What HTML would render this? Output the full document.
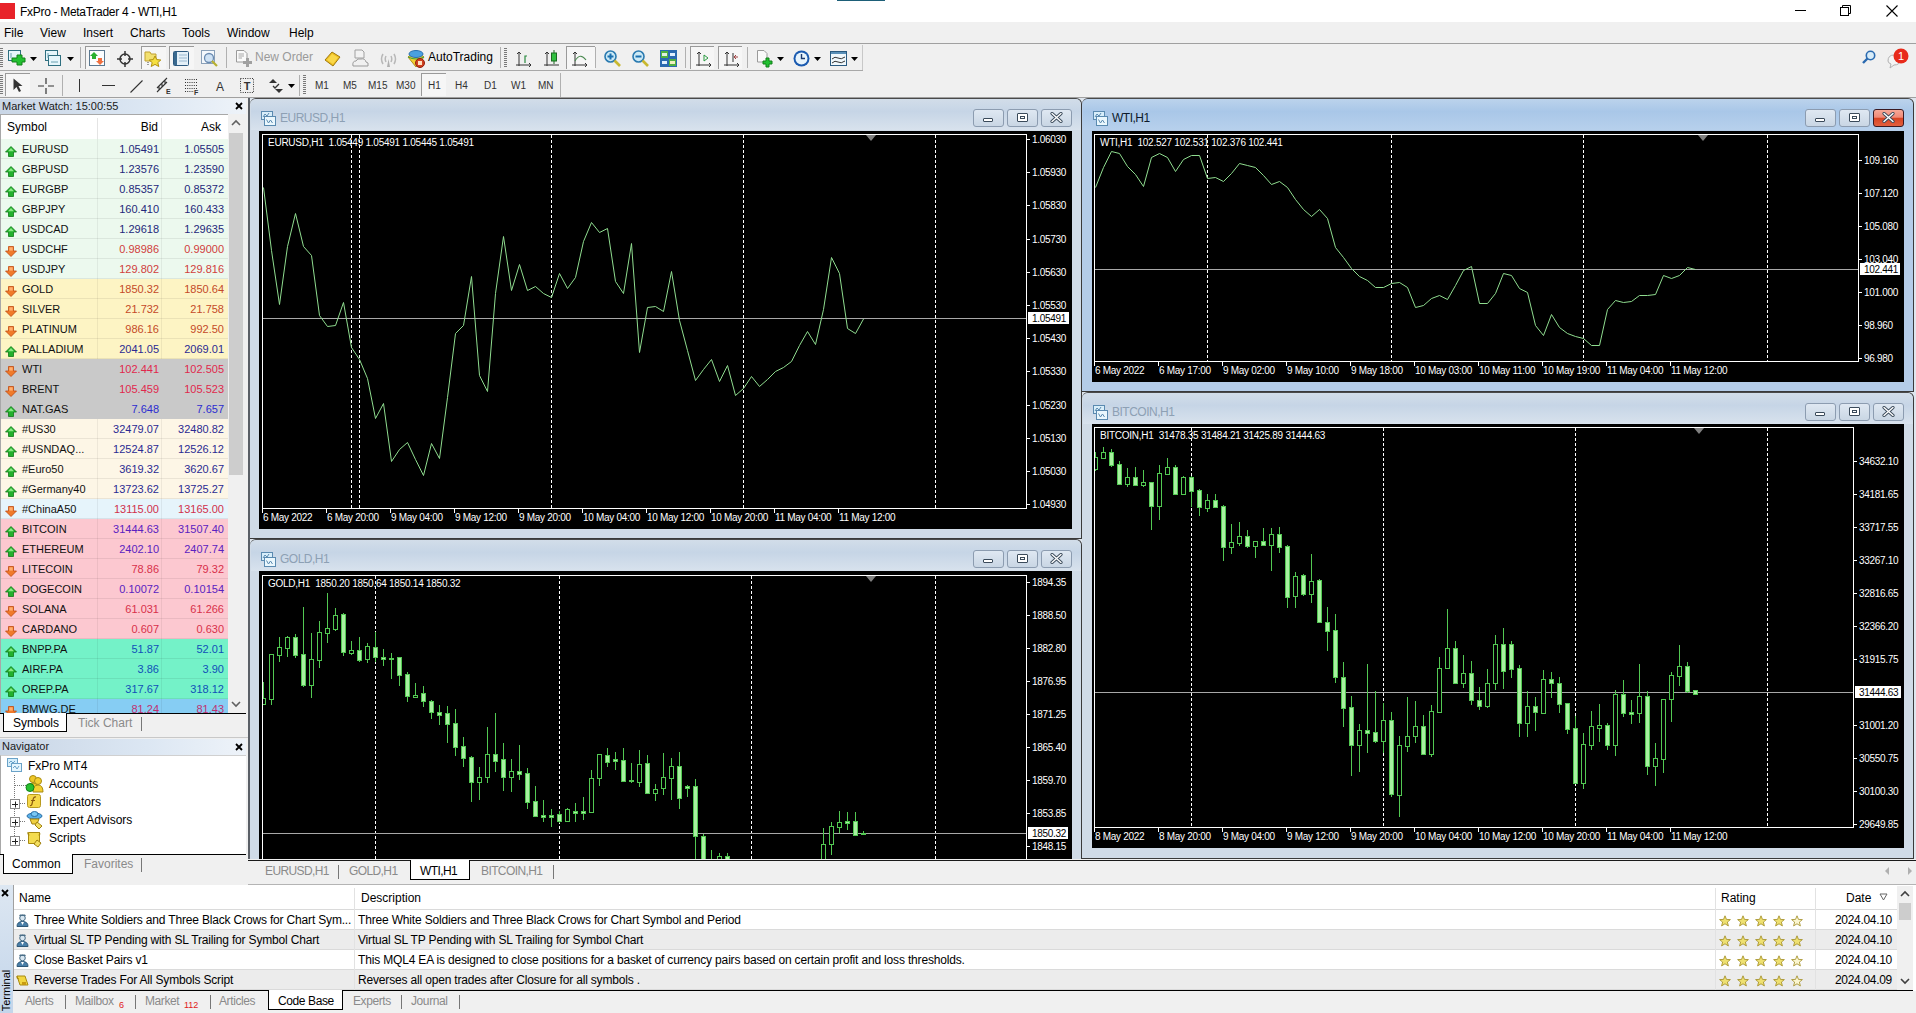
<!DOCTYPE html><html><head><meta charset="utf-8"><style>
html,body{margin:0;padding:0;width:1916px;height:1013px;overflow:hidden;background:#f0f0f0;font-family:"Liberation Sans",sans-serif;}
.t{position:absolute;white-space:nowrap;line-height:1;}
.r{text-align:right;}
</style></head><body>
<div style="position:absolute;left:0px;top:0px;width:1916px;height:22px;background:#fff"></div>
<div style="position:absolute;left:0px;top:3px;width:15px;height:16px;background:#e8232a"></div>
<div class="t" style="left:20px;top:6px;font-size:12px;color:#000;letter-spacing:-0.3px">FxPro - MetaTrader 4 - WTI,H1</div>
<div style="position:absolute;left:837px;top:0px;width:48px;height:1px;background:#1d5f78"></div>
<div style="position:absolute;left:1795px;top:10px;width:11px;height:1px;background:#000"></div>
<svg style="position:absolute;left:1840px;top:5px" width="12" height="12"><path d="M2.5 2.5 V0.5 H10.5 V8.5 H8.5" fill="none" stroke="#000"/><rect x="0.5" y="2.5" width="8" height="8" fill="#fff" stroke="#000"/></svg>
<svg style="position:absolute;left:1886px;top:5px" width="12" height="12"><path d="M0.5 0.5 L11.5 11.5 M11.5 0.5 L0.5 11.5" stroke="#000" stroke-width="1.1"/></svg>
<div style="position:absolute;left:0px;top:22px;width:1916px;height:22px;background:#f0f0f0"></div>
<div class="t" style="left:4px;top:27px;font-size:12px;color:#000;">File</div>
<div class="t" style="left:40px;top:27px;font-size:12px;color:#000;">View</div>
<div class="t" style="left:83px;top:27px;font-size:12px;color:#000;">Insert</div>
<div class="t" style="left:130px;top:27px;font-size:12px;color:#000;">Charts</div>
<div class="t" style="left:182px;top:27px;font-size:12px;color:#000;">Tools</div>
<div class="t" style="left:227px;top:27px;font-size:12px;color:#000;">Window</div>
<div class="t" style="left:289px;top:27px;font-size:12px;color:#000;">Help</div>
<div style="position:absolute;left:0px;top:43px;width:1916px;height:1px;background:#a0a0a0"></div>
<div style="position:absolute;left:0px;top:44px;width:1916px;height:54px;background:#f0f0f0"></div>
<div style="position:absolute;left:0px;top:70px;width:863px;height:1px;background:#a8a8a8"></div>
<div style="position:absolute;left:0px;top:97px;width:1916px;height:1px;background:#a0a0a0"></div>
<svg style="position:absolute;left:0px;top:48px" width="3" height="20" viewBox="0 0 3 20"><rect x="0" y="0" width="3" height="1" fill="#7a7a7a"/><rect x="0" y="2" width="3" height="1" fill="#7a7a7a"/><rect x="0" y="4" width="3" height="1" fill="#7a7a7a"/><rect x="0" y="6" width="3" height="1" fill="#7a7a7a"/><rect x="0" y="8" width="3" height="1" fill="#7a7a7a"/><rect x="0" y="10" width="3" height="1" fill="#7a7a7a"/><rect x="0" y="12" width="3" height="1" fill="#7a7a7a"/><rect x="0" y="14" width="3" height="1" fill="#7a7a7a"/><rect x="0" y="16" width="3" height="1" fill="#7a7a7a"/><rect x="0" y="18" width="3" height="1" fill="#7a7a7a"/></svg>
<svg style="position:absolute;left:8px;top:50px" width="18" height="16" viewBox="0 0 18 16"><rect x="0.5" y="0.5" width="12" height="10" fill="#e6f6fb" stroke="#2f6f80"/><path d="M3 3 V8" stroke="#6aa0b0"/><path d="M5 9 H10 V6 H15 V9 H18 V13 H15 V16 H10 V13 H5Z" transform="translate(-1,-1)" fill="#22c030" stroke="#118018"/></svg>
<svg style="position:absolute;left:30px;top:57px" width="7" height="4" viewBox="0 0 7 4"><path d="M0 0 H7 L3.5 4Z" fill="#000"/></svg>
<svg style="position:absolute;left:45px;top:50px" width="18" height="17" viewBox="0 0 18 17"><rect x="0.5" y="0.5" width="12" height="10" fill="#e6f6fb" stroke="#2f6f80"/><rect x="3.5" y="5.5" width="12" height="10" fill="#e6f6fb" stroke="#2f6f80"/><path d="M3 3 V8 M6 12 H13" stroke="#6aa0b0"/></svg>
<svg style="position:absolute;left:67px;top:57px" width="7" height="4" viewBox="0 0 7 4"><path d="M0 0 H7 L3.5 4Z" fill="#000"/></svg>
<div style="position:absolute;left:80px;top:47px;width:1px;height:21px;background:#b0b0b0"></div>
<div style="position:absolute;left:85px;top:46px;width:25px;height:23px;border-top:1px solid #9a9a9a;border-left:1px solid #9a9a9a;background:#f6f6f6;box-sizing:border-box"></div>
<svg style="position:absolute;left:89px;top:50px" width="16" height="16" viewBox="0 0 16 16"><rect x="0.5" y="0.5" width="15" height="15" fill="#fbfdff" stroke="#5a7890"/><path d="M5 2 L9 6 H7 V9 H3 V6 H1Z" fill="#28b030"/><path d="M9 8 H13 V11 H15 L11 15 L7 11 H9Z" fill="#f07040"/></svg>
<svg style="position:absolute;left:117px;top:51px" width="16" height="16" viewBox="0 0 16 16"><circle cx="8" cy="8" r="5" fill="none" stroke="#333" stroke-width="1.5"/><path d="M8 0 V5 M8 11 V16 M0 8 H5 M11 8 H16" stroke="#333" stroke-width="1.5"/></svg>
<div style="position:absolute;left:141px;top:46px;width:25px;height:23px;border-top:1px solid #9a9a9a;border-left:1px solid #9a9a9a;background:#f6f6f6;box-sizing:border-box"></div>
<svg style="position:absolute;left:144px;top:50px" width="18" height="17" viewBox="0 0 18 17"><path d="M1 2 H6 L7 4 H12 V11 H1Z" fill="#f2e070" stroke="#c0a030"/><path d="M11 6 L12.8 9.6 L16.8 10 L13.8 12.6 L14.8 16.5 L11 14.4 L7.2 16.5 L8.2 12.6 L5.2 10 L9.2 9.6Z" fill="#f6e040" stroke="#b09010"/><path d="M4 12 V16" stroke="#444" stroke-dasharray="1 1"/></svg>
<div style="position:absolute;left:169px;top:46px;width:25px;height:23px;border-top:1px solid #9a9a9a;border-left:1px solid #9a9a9a;background:#f6f6f6;box-sizing:border-box"></div>
<svg style="position:absolute;left:173px;top:51px" width="16" height="15" viewBox="0 0 16 15"><rect x="0.5" y="0.5" width="15" height="14" rx="1" fill="#e4f0f8" stroke="#2e5a80"/><rect x="1" y="1" width="3" height="13" fill="#3a6a90"/><path d="M6 4 H14 M6 7 H14 M6 10 H14" stroke="#9ab8d0"/></svg>
<svg style="position:absolute;left:201px;top:50px" width="18" height="18" viewBox="0 0 18 18"><rect x="0.5" y="0.5" width="13" height="13" fill="#f4f8fc" stroke="#8aa0b8"/><circle cx="8" cy="8" r="4.5" fill="#cfe2f4" stroke="#6a8ab0" stroke-width="1.3"/><path d="M11 11 L16 16" stroke="#b8b030" stroke-width="2.2"/></svg>
<div style="position:absolute;left:226px;top:47px;width:1px;height:21px;background:#b0b0b0"></div>
<svg style="position:absolute;left:236px;top:50px" width="17" height="18" viewBox="0 0 17 18"><path d="M0.5 0.5 H8 L11 3.5 V12 H0.5Z" fill="#fafafa" stroke="#9a9a9a"/><path d="M2.5 4 H8 M2.5 6 H8 M2.5 8 H6" stroke="#a8a8a8"/><path d="M7 11 H10 V8 H13 V11 H16 V14 H13 V17 H10 V14 H7Z" fill="#a0a0a0"/></svg>
<div class="t" style="left:255px;top:51px;font-size:12px;color:#9a9a9a;">New Order</div>
<svg style="position:absolute;left:324px;top:51px" width="17" height="16" viewBox="0 0 17 16"><path d="M1 9 L8 1 L16 6 L9 15Z" fill="#f0c020" stroke="#a07a10"/><path d="M3 9 L8 3 L14 6.5 L9 13Z" fill="#fad84a"/></svg>
<svg style="position:absolute;left:352px;top:49px" width="17" height="18" viewBox="0 0 17 18"><path d="M3 1 H10 L12 3 V9 H3Z" fill="#f2f2f2" stroke="#a0a0a0"/><path d="M1 17 Q0 12 4 12 Q5 9 9 10 Q13 9 14 13 Q17 13 16 17Z" fill="#f0f0f0" stroke="#9a9a9a"/></svg>
<svg style="position:absolute;left:380px;top:51px" width="17" height="16" viewBox="0 0 17 16"><path d="M3 3 Q0 8 3 13 M14 3 Q17 8 14 13 M6 5 Q4.5 8 6 11 M11 5 Q12.5 8 11 11" stroke="#b8b8b8" stroke-width="1.5" fill="none"/><path d="M8.5 8 L7 16 H10Z" fill="#b0b0b0"/></svg>
<svg style="position:absolute;left:407px;top:49px" width="18" height="19" viewBox="0 0 18 19"><path d="M1 8 L9 18 L17 8 Q15 5 9 5 Q3 5 1 8Z" fill="#f2d030" stroke="#b09020"/><path d="M1 8 Q9 12 17 8" stroke="#40a040" fill="none"/><ellipse cx="9" cy="5" rx="7" ry="3.5" fill="#4aa0e0" stroke="#2a70b0"/><circle cx="13" cy="14" r="4.5" fill="#d04020" stroke="#902010"/><rect x="11" y="12" width="4" height="4" fill="#ffe0c0"/></svg>
<div class="t" style="left:428px;top:51px;font-size:12px;color:#000;">AutoTrading</div>
<div style="position:absolute;left:500px;top:47px;width:1px;height:21px;background:#b0b0b0"></div>
<svg style="position:absolute;left:504px;top:48px" width="3" height="20" viewBox="0 0 3 20"><rect x="0" y="0" width="3" height="1" fill="#7a7a7a"/><rect x="0" y="2" width="3" height="1" fill="#7a7a7a"/><rect x="0" y="4" width="3" height="1" fill="#7a7a7a"/><rect x="0" y="6" width="3" height="1" fill="#7a7a7a"/><rect x="0" y="8" width="3" height="1" fill="#7a7a7a"/><rect x="0" y="10" width="3" height="1" fill="#7a7a7a"/><rect x="0" y="12" width="3" height="1" fill="#7a7a7a"/><rect x="0" y="14" width="3" height="1" fill="#7a7a7a"/><rect x="0" y="16" width="3" height="1" fill="#7a7a7a"/><rect x="0" y="18" width="3" height="1" fill="#7a7a7a"/></svg>
<svg style="position:absolute;left:516px;top:52px" width="15" height="15" viewBox="0 0 15 15"><path d="M3 0 V14 M0 13 H15 M1 2 L3 0 L5 2 M13 11 L15 13 L13 15" stroke="#333" fill="none"/><path d="M9 11 V4 H11" stroke="#2a8a40" fill="none" stroke-width="1.2"/></svg>
<svg style="position:absolute;left:544px;top:50px" width="15" height="17" viewBox="0 0 15 17"><path d="M3 2 V16 M0 15 H15 M1 4 L3 2 L5 4" stroke="#333" fill="none"/><path d="M10 0 V14" stroke="#1a6a20"/><rect x="7.5" y="3" width="5" height="8" fill="#30c040" stroke="#1a6a20"/></svg>
<div style="position:absolute;left:566px;top:46px;width:29px;height:23px;border-top:1px solid #9a9a9a;border-left:1px solid #9a9a9a;background:#f6f6f6;box-sizing:border-box"></div>
<svg style="position:absolute;left:572px;top:52px" width="15" height="15" viewBox="0 0 15 15"><path d="M3 0 V14 M0 13 H15 M1 2 L3 0 L5 2 M13 11 L15 13 L13 15" stroke="#333" fill="none"/><path d="M3 9 Q8 0 14 8" stroke="#4a8a50" fill="none" stroke-width="1.1"/></svg>
<div style="position:absolute;left:595px;top:47px;width:1px;height:21px;background:#b0b0b0"></div>
<svg style="position:absolute;left:604px;top:50px" width="17" height="17" viewBox="0 0 17 17"><circle cx="6.5" cy="6.5" r="5.5" fill="#cdeaf6" stroke="#2a7ab0" stroke-width="1.6"/><path d="M6.5 3.5 V9.5 M3.5 6.5 H9.5" stroke="#1a70b0" stroke-width="2"/><path d="M10.5 10.5 L16 16" stroke="#c8b830" stroke-width="2.6"/></svg>
<svg style="position:absolute;left:632px;top:50px" width="17" height="17" viewBox="0 0 17 17"><circle cx="6.5" cy="6.5" r="5.5" fill="#cdeaf6" stroke="#2a7ab0" stroke-width="1.6"/><path d="M3.5 6.5 H9.5" stroke="#1a70b0" stroke-width="2"/><path d="M10.5 10.5 L16 16" stroke="#c8b830" stroke-width="2.6"/></svg>
<svg style="position:absolute;left:660px;top:50px" width="17" height="17" viewBox="0 0 17 17"><rect x="0" y="0" width="17" height="17" fill="#2a6ab0"/><rect x="1" y="1" width="7" height="7" fill="#50b040"/><rect x="9" y="9" width="7" height="7" fill="#50b040"/><rect x="2" y="3" width="5" height="3" fill="#e0f0e0"/><rect x="10" y="3" width="5" height="3" fill="#e0f0ff"/><rect x="2" y="11" width="5" height="3" fill="#e0f0ff"/><rect x="10" y="11" width="5" height="3" fill="#f0f0c0"/></svg>
<div style="position:absolute;left:685px;top:47px;width:1px;height:21px;background:#b0b0b0"></div>
<div style="position:absolute;left:690px;top:46px;width:24px;height:23px;border-top:1px solid #9a9a9a;border-left:1px solid #9a9a9a;background:#f6f6f6;box-sizing:border-box"></div>
<svg style="position:absolute;left:696px;top:52px" width="15" height="15" viewBox="0 0 15 15"><path d="M3 0 V14 M0 13 H15 M1 2 L3 0 L5 2 M13 11 L15 13 L13 15" stroke="#333" fill="none"/><path d="M8 3 L12 6 L8 9Z" fill="none" stroke="#2a9a40"/></svg>
<div style="position:absolute;left:718px;top:46px;width:24px;height:23px;border-top:1px solid #9a9a9a;border-left:1px solid #9a9a9a;background:#f6f6f6;box-sizing:border-box"></div>
<svg style="position:absolute;left:724px;top:52px" width="15" height="15" viewBox="0 0 15 15"><path d="M3 0 V14 M0 13 H15 M1 2 L3 0 L5 2 M13 11 L15 13 L13 15 M9 1 V10" stroke="#333" fill="none"/><path d="M14 5 H10 M12 3 L10 5 L12 7" stroke="#a04040" fill="none"/></svg>
<div style="position:absolute;left:747px;top:47px;width:1px;height:21px;background:#b0b0b0"></div>
<svg style="position:absolute;left:757px;top:50px" width="17" height="18" viewBox="0 0 17 18"><path d="M0.5 0.5 H7 L10 3.5 V12 H0.5Z" fill="#fafafa" stroke="#9a9a9a"/><path d="M6 11 H9 V8 H12 V11 H15 V14 H12 V17 H9 V14 H6Z" fill="#20c030" stroke="#108018"/></svg>
<svg style="position:absolute;left:777px;top:57px" width="7" height="4" viewBox="0 0 7 4"><path d="M0 0 H7 L3.5 4Z" fill="#000"/></svg>
<svg style="position:absolute;left:793px;top:50px" width="17" height="17" viewBox="0 0 17 17"><circle cx="8.5" cy="8.5" r="8" fill="#1a5ab0"/><circle cx="8.5" cy="8.5" r="6" fill="#e8f4fc"/><path d="M8.5 4 V8.5 H12" stroke="#1a3a70" stroke-width="1.4" fill="none"/></svg>
<svg style="position:absolute;left:814px;top:57px" width="7" height="4" viewBox="0 0 7 4"><path d="M0 0 H7 L3.5 4Z" fill="#000"/></svg>
<svg style="position:absolute;left:830px;top:51px" width="17" height="15" viewBox="0 0 17 15"><rect x="0.5" y="0.5" width="16" height="14" fill="#f0f8fc" stroke="#2a5a80"/><rect x="1" y="1" width="15" height="2" fill="#5a90b8"/><path d="M2 8 Q5 5 8 7 T15 6 M2 12 Q5 9 8 11 T15 10" stroke="#333" fill="none"/></svg>
<svg style="position:absolute;left:851px;top:57px" width="7" height="4" viewBox="0 0 7 4"><path d="M0 0 H7 L3.5 4Z" fill="#000"/></svg>
<div style="position:absolute;left:862px;top:45px;width:1px;height:25px;background:#c8c8c8"></div>
<svg style="position:absolute;left:1862px;top:50px" width="14" height="14" viewBox="0 0 14 14"><circle cx="8.5" cy="5.5" r="4.2" fill="#d8ecf8" stroke="#2a6ab0" stroke-width="1.6"/><path d="M5.5 8.5 L1 13" stroke="#2a6ab0" stroke-width="2.4"/></svg>
<svg style="position:absolute;left:1884px;top:47px" width="30" height="22" viewBox="0 0 30 22"><path d="M4 14 Q4 8 10 8 Q16 8 16 13 Q16 18 10 18 L6 21 L7 17 Q4 16 4 14Z" fill="#f4f4f4" stroke="#b0b0b0"/><circle cx="17" cy="9" r="7.5" fill="#e82a1a"/><text x="17" y="13" font-size="11" fill="#fff" text-anchor="middle" font-family="Liberation Sans">1</text></svg>
<svg style="position:absolute;left:0px;top:75px" width="3" height="20" viewBox="0 0 3 20"><rect x="0" y="0" width="3" height="1" fill="#7a7a7a"/><rect x="0" y="2" width="3" height="1" fill="#7a7a7a"/><rect x="0" y="4" width="3" height="1" fill="#7a7a7a"/><rect x="0" y="6" width="3" height="1" fill="#7a7a7a"/><rect x="0" y="8" width="3" height="1" fill="#7a7a7a"/><rect x="0" y="10" width="3" height="1" fill="#7a7a7a"/><rect x="0" y="12" width="3" height="1" fill="#7a7a7a"/><rect x="0" y="14" width="3" height="1" fill="#7a7a7a"/><rect x="0" y="16" width="3" height="1" fill="#7a7a7a"/><rect x="0" y="18" width="3" height="1" fill="#7a7a7a"/></svg>
<div style="position:absolute;left:5px;top:73px;width:25px;height:23px;border-top:1px solid #9a9a9a;border-left:1px solid #9a9a9a;background:#f6f6f6;box-sizing:border-box"></div>
<svg style="position:absolute;left:13px;top:78px" width="10" height="15" viewBox="0 0 10 15"><path d="M0.5 0.5 L0.5 12 L3.5 9 L6 14 L8 13 L5.5 8 L9.5 8Z" fill="#333"/></svg>
<svg style="position:absolute;left:38px;top:78px" width="16" height="16" viewBox="0 0 16 16"><path d="M8 0 V6 M8 10 V16 M0 8 H6 M10 8 H16" stroke="#333" stroke-width="1.2"/></svg>
<div style="position:absolute;left:62px;top:75px;width:1px;height:21px;background:#b0b0b0"></div>
<div style="position:absolute;left:79px;top:79px;width:1px;height:13px;background:#333"></div>
<div style="position:absolute;left:102px;top:85px;width:13px;height:1px;background:#333"></div>
<svg style="position:absolute;left:130px;top:80px" width="13" height="13" viewBox="0 0 13 13"><path d="M0.5 12.5 L12.5 0.5" stroke="#333" stroke-width="1.1"/></svg>
<svg style="position:absolute;left:156px;top:77px" width="16" height="18" viewBox="0 0 16 18"><path d="M1 11 L11 1 M1 15 L11 5 M3 13 V9 M6 10 V6 M9 7 V3" stroke="#333" stroke-width="1.1" fill="none"/><text x="10" y="17" font-size="7" font-weight="bold" fill="#333" font-family="Liberation Sans">E</text></svg>
<svg style="position:absolute;left:184px;top:78px" width="16" height="17" viewBox="0 0 16 17"><path d="M1 1.5 H13 M1 4.5 H13 M1 7.5 H13 M1 10.5 H13 M1 13.5 H10" stroke="#333" stroke-dasharray="1 1.2"/><text x="10" y="17" font-size="7" font-weight="bold" fill="#333" font-family="Liberation Sans">F</text></svg>
<div class="t" style="left:216px;top:81px;font-size:12px;color:#333;">A</div>
<svg style="position:absolute;left:240px;top:78px" width="14" height="15" viewBox="0 0 14 15"><rect x="0.5" y="0.5" width="13" height="14" fill="none" stroke="#333" stroke-dasharray="1 1.3"/><text x="7" y="12" font-size="11" font-weight="bold" text-anchor="middle" fill="#333" font-family="Liberation Sans">T</text></svg>
<svg style="position:absolute;left:269px;top:79px" width="15" height="14" viewBox="0 0 15 14"><path d="M4 0 L8 4 H0Z M10 14 L6 10 H14Z" fill="#333"/><path d="M4 7 L6 9 L10 5" stroke="#333" stroke-width="1.3" fill="none"/></svg>
<svg style="position:absolute;left:288px;top:84px" width="7" height="4" viewBox="0 0 7 4"><path d="M0 0 H7 L3.5 4Z" fill="#000"/></svg>
<div style="position:absolute;left:299px;top:75px;width:1px;height:21px;background:#b0b0b0"></div>
<svg style="position:absolute;left:303px;top:75px" width="3" height="20" viewBox="0 0 3 20"><rect x="0" y="0" width="3" height="1" fill="#7a7a7a"/><rect x="0" y="2" width="3" height="1" fill="#7a7a7a"/><rect x="0" y="4" width="3" height="1" fill="#7a7a7a"/><rect x="0" y="6" width="3" height="1" fill="#7a7a7a"/><rect x="0" y="8" width="3" height="1" fill="#7a7a7a"/><rect x="0" y="10" width="3" height="1" fill="#7a7a7a"/><rect x="0" y="12" width="3" height="1" fill="#7a7a7a"/><rect x="0" y="14" width="3" height="1" fill="#7a7a7a"/><rect x="0" y="16" width="3" height="1" fill="#7a7a7a"/><rect x="0" y="18" width="3" height="1" fill="#7a7a7a"/></svg>
<div style="position:absolute;left:421px;top:73px;width:25px;height:23px;border-top:1px solid #9a9a9a;border-left:1px solid #9a9a9a;background:#f6f6f6;box-sizing:border-box"></div>
<div class="t" style="left:315px;top:81px;font-size:10px;color:#333;">M1</div>
<div class="t" style="left:343px;top:81px;font-size:10px;color:#333;">M5</div>
<div class="t" style="left:368px;top:81px;font-size:10px;color:#333;">M15</div>
<div class="t" style="left:396px;top:81px;font-size:10px;color:#333;">M30</div>
<div class="t" style="left:428px;top:81px;font-size:10px;color:#333;">H1</div>
<div class="t" style="left:455px;top:81px;font-size:10px;color:#333;">H4</div>
<div class="t" style="left:484px;top:81px;font-size:10px;color:#333;">D1</div>
<div class="t" style="left:511px;top:81px;font-size:10px;color:#333;">W1</div>
<div class="t" style="left:538px;top:81px;font-size:10px;color:#333;">MN</div>
<div style="position:absolute;left:560px;top:73px;width:1px;height:24px;background:#b0b0b0"></div>
<div style="position:absolute;left:248px;top:98px;width:1668px;height:763px;background:#dfe6ee"></div>
<div style="position:absolute;left:248px;top:98px;width:2px;height:763px;background:#5a5f66"></div>
<div style="position:absolute;left:0px;top:98px;width:248px;height:640px;background:#f0f0f0"></div>
<div style="position:absolute;left:0px;top:99px;width:246px;height:15px;background:linear-gradient(to right,#c9d6e6,#dce7f3 60%,#eef3f9)"></div>
<div class="t" style="left:2px;top:101px;font-size:11px;color:#1a1a1a;">Market Watch: 15:00:55</div>
<svg style="position:absolute;left:235px;top:102px" width="8" height="8"><path d="M1 1 L7 7 M7 1 L1 7" stroke="#000" stroke-width="1.8"/></svg>
<div style="position:absolute;left:0px;top:114px;width:1px;height:599px;background:#a8a8a8"></div>
<div style="position:absolute;left:1px;top:115px;width:227px;height:24px;background:#fff"></div>
<div style="position:absolute;left:97px;top:118px;width:1px;height:21px;background:#e4e4e4"></div>
<div style="position:absolute;left:161px;top:118px;width:1px;height:21px;background:#e4e4e4"></div>
<div class="t" style="left:7px;top:121px;font-size:12px;color:#000;">Symbol</div>
<div class="t" style="left:97px;top:121px;font-size:12px;color:#000;width:61px;text-align:right">Bid</div>
<div class="t" style="left:161px;top:121px;font-size:12px;color:#000;width:60px;text-align:right">Ask</div>
<div style="position:absolute;left:1px;top:114px;width:227px;height:1px;background:#a8a8a8"></div>
<div style="position:absolute;left:1px;top:139px;width:227px;height:574px;overflow:hidden">
<div style="position:absolute;left:0;top:0px;width:227px;height:20px;background:#ecf9ee"></div>
<div style="position:absolute;left:0;top:19px;width:227px;height:1px;background:rgba(0,0,0,0.07)"></div>
<div style="position:absolute;left:96px;top:0px;width:1px;height:20px;background:rgba(0,0,0,0.06)"></div>
<div style="position:absolute;left:160px;top:0px;width:1px;height:20px;background:rgba(0,0,0,0.06)"></div>
<div style="position:absolute;left:4px;top:4px;width:12px;height:11px"><svg width="12" height="11" viewBox="0 0 12 11"><path d="M6 0.5 L11.5 6 L8.5 6 L8.5 10.5 L3.5 10.5 L3.5 6 L0.5 6 Z" fill="#22b02c" stroke="#0e7a16" stroke-width="0.8"/><path d="M6 2 L9 5.2 L3 5.2Z" fill="#8ae884"/></svg></div>
<div class="t" style="left:21px;top:5px;font-size:11px;color:#111">EURUSD</div>
<div class="t" style="left:96px;top:5px;width:62px;text-align:right;font-size:11px;color:#24287a">1.05491</div>
<div class="t" style="left:160px;top:5px;width:63px;text-align:right;font-size:11px;color:#24287a">1.05505</div>
<div style="position:absolute;left:0;top:20px;width:227px;height:20px;background:#ecf9ee"></div>
<div style="position:absolute;left:0;top:39px;width:227px;height:1px;background:rgba(0,0,0,0.07)"></div>
<div style="position:absolute;left:96px;top:20px;width:1px;height:20px;background:rgba(0,0,0,0.06)"></div>
<div style="position:absolute;left:160px;top:20px;width:1px;height:20px;background:rgba(0,0,0,0.06)"></div>
<div style="position:absolute;left:4px;top:24px;width:12px;height:11px"><svg width="12" height="11" viewBox="0 0 12 11"><path d="M6 0.5 L11.5 6 L8.5 6 L8.5 10.5 L3.5 10.5 L3.5 6 L0.5 6 Z" fill="#22b02c" stroke="#0e7a16" stroke-width="0.8"/><path d="M6 2 L9 5.2 L3 5.2Z" fill="#8ae884"/></svg></div>
<div class="t" style="left:21px;top:25px;font-size:11px;color:#111">GBPUSD</div>
<div class="t" style="left:96px;top:25px;width:62px;text-align:right;font-size:11px;color:#24287a">1.23576</div>
<div class="t" style="left:160px;top:25px;width:63px;text-align:right;font-size:11px;color:#24287a">1.23590</div>
<div style="position:absolute;left:0;top:40px;width:227px;height:20px;background:#ecf9ee"></div>
<div style="position:absolute;left:0;top:59px;width:227px;height:1px;background:rgba(0,0,0,0.07)"></div>
<div style="position:absolute;left:96px;top:40px;width:1px;height:20px;background:rgba(0,0,0,0.06)"></div>
<div style="position:absolute;left:160px;top:40px;width:1px;height:20px;background:rgba(0,0,0,0.06)"></div>
<div style="position:absolute;left:4px;top:44px;width:12px;height:11px"><svg width="12" height="11" viewBox="0 0 12 11"><path d="M6 0.5 L11.5 6 L8.5 6 L8.5 10.5 L3.5 10.5 L3.5 6 L0.5 6 Z" fill="#22b02c" stroke="#0e7a16" stroke-width="0.8"/><path d="M6 2 L9 5.2 L3 5.2Z" fill="#8ae884"/></svg></div>
<div class="t" style="left:21px;top:45px;font-size:11px;color:#111">EURGBP</div>
<div class="t" style="left:96px;top:45px;width:62px;text-align:right;font-size:11px;color:#24287a">0.85357</div>
<div class="t" style="left:160px;top:45px;width:63px;text-align:right;font-size:11px;color:#24287a">0.85372</div>
<div style="position:absolute;left:0;top:60px;width:227px;height:20px;background:#ecf9ee"></div>
<div style="position:absolute;left:0;top:79px;width:227px;height:1px;background:rgba(0,0,0,0.07)"></div>
<div style="position:absolute;left:96px;top:60px;width:1px;height:20px;background:rgba(0,0,0,0.06)"></div>
<div style="position:absolute;left:160px;top:60px;width:1px;height:20px;background:rgba(0,0,0,0.06)"></div>
<div style="position:absolute;left:4px;top:64px;width:12px;height:11px"><svg width="12" height="11" viewBox="0 0 12 11"><path d="M6 0.5 L11.5 6 L8.5 6 L8.5 10.5 L3.5 10.5 L3.5 6 L0.5 6 Z" fill="#22b02c" stroke="#0e7a16" stroke-width="0.8"/><path d="M6 2 L9 5.2 L3 5.2Z" fill="#8ae884"/></svg></div>
<div class="t" style="left:21px;top:65px;font-size:11px;color:#111">GBPJPY</div>
<div class="t" style="left:96px;top:65px;width:62px;text-align:right;font-size:11px;color:#24287a">160.410</div>
<div class="t" style="left:160px;top:65px;width:63px;text-align:right;font-size:11px;color:#24287a">160.433</div>
<div style="position:absolute;left:0;top:80px;width:227px;height:20px;background:#ecf9ee"></div>
<div style="position:absolute;left:0;top:99px;width:227px;height:1px;background:rgba(0,0,0,0.07)"></div>
<div style="position:absolute;left:96px;top:80px;width:1px;height:20px;background:rgba(0,0,0,0.06)"></div>
<div style="position:absolute;left:160px;top:80px;width:1px;height:20px;background:rgba(0,0,0,0.06)"></div>
<div style="position:absolute;left:4px;top:84px;width:12px;height:11px"><svg width="12" height="11" viewBox="0 0 12 11"><path d="M6 0.5 L11.5 6 L8.5 6 L8.5 10.5 L3.5 10.5 L3.5 6 L0.5 6 Z" fill="#22b02c" stroke="#0e7a16" stroke-width="0.8"/><path d="M6 2 L9 5.2 L3 5.2Z" fill="#8ae884"/></svg></div>
<div class="t" style="left:21px;top:85px;font-size:11px;color:#111">USDCAD</div>
<div class="t" style="left:96px;top:85px;width:62px;text-align:right;font-size:11px;color:#24287a">1.29618</div>
<div class="t" style="left:160px;top:85px;width:63px;text-align:right;font-size:11px;color:#24287a">1.29635</div>
<div style="position:absolute;left:0;top:100px;width:227px;height:20px;background:#ecf9ee"></div>
<div style="position:absolute;left:0;top:119px;width:227px;height:1px;background:rgba(0,0,0,0.07)"></div>
<div style="position:absolute;left:96px;top:100px;width:1px;height:20px;background:rgba(0,0,0,0.06)"></div>
<div style="position:absolute;left:160px;top:100px;width:1px;height:20px;background:rgba(0,0,0,0.06)"></div>
<div style="position:absolute;left:4px;top:104px;width:12px;height:11px"><svg width="12" height="11" viewBox="0 0 12 11"><path d="M3.5 0.5 L8.5 0.5 L8.5 5 L11.5 5 L6 10.5 L0.5 5 L3.5 5 Z" fill="#f07a2a" stroke="#c04a10" stroke-width="0.8"/><path d="M4.3 1.3 L7.7 1.3 L7.7 4.6 L4.3 4.6Z" fill="#ffb070"/></svg></div>
<div class="t" style="left:21px;top:105px;font-size:11px;color:#111">USDCHF</div>
<div class="t" style="left:96px;top:105px;width:62px;text-align:right;font-size:11px;color:#d0403c">0.98986</div>
<div class="t" style="left:160px;top:105px;width:63px;text-align:right;font-size:11px;color:#d0403c">0.99000</div>
<div style="position:absolute;left:0;top:120px;width:227px;height:20px;background:#ecf9ee"></div>
<div style="position:absolute;left:0;top:139px;width:227px;height:1px;background:rgba(0,0,0,0.07)"></div>
<div style="position:absolute;left:96px;top:120px;width:1px;height:20px;background:rgba(0,0,0,0.06)"></div>
<div style="position:absolute;left:160px;top:120px;width:1px;height:20px;background:rgba(0,0,0,0.06)"></div>
<div style="position:absolute;left:4px;top:124px;width:12px;height:11px"><svg width="12" height="11" viewBox="0 0 12 11"><path d="M3.5 0.5 L8.5 0.5 L8.5 5 L11.5 5 L6 10.5 L0.5 5 L3.5 5 Z" fill="#f07a2a" stroke="#c04a10" stroke-width="0.8"/><path d="M4.3 1.3 L7.7 1.3 L7.7 4.6 L4.3 4.6Z" fill="#ffb070"/></svg></div>
<div class="t" style="left:21px;top:125px;font-size:11px;color:#111">USDJPY</div>
<div class="t" style="left:96px;top:125px;width:62px;text-align:right;font-size:11px;color:#d0403c">129.802</div>
<div class="t" style="left:160px;top:125px;width:63px;text-align:right;font-size:11px;color:#d0403c">129.816</div>
<div style="position:absolute;left:0;top:140px;width:227px;height:20px;background:#fdf4c4"></div>
<div style="position:absolute;left:0;top:159px;width:227px;height:1px;background:rgba(0,0,0,0.07)"></div>
<div style="position:absolute;left:96px;top:140px;width:1px;height:20px;background:rgba(0,0,0,0.06)"></div>
<div style="position:absolute;left:160px;top:140px;width:1px;height:20px;background:rgba(0,0,0,0.06)"></div>
<div style="position:absolute;left:4px;top:144px;width:12px;height:11px"><svg width="12" height="11" viewBox="0 0 12 11"><path d="M3.5 0.5 L8.5 0.5 L8.5 5 L11.5 5 L6 10.5 L0.5 5 L3.5 5 Z" fill="#f07a2a" stroke="#c04a10" stroke-width="0.8"/><path d="M4.3 1.3 L7.7 1.3 L7.7 4.6 L4.3 4.6Z" fill="#ffb070"/></svg></div>
<div class="t" style="left:21px;top:145px;font-size:11px;color:#111">GOLD</div>
<div class="t" style="left:96px;top:145px;width:62px;text-align:right;font-size:11px;color:#c44a28">1850.32</div>
<div class="t" style="left:160px;top:145px;width:63px;text-align:right;font-size:11px;color:#c44a28">1850.64</div>
<div style="position:absolute;left:0;top:160px;width:227px;height:20px;background:#fdf4c4"></div>
<div style="position:absolute;left:0;top:179px;width:227px;height:1px;background:rgba(0,0,0,0.07)"></div>
<div style="position:absolute;left:96px;top:160px;width:1px;height:20px;background:rgba(0,0,0,0.06)"></div>
<div style="position:absolute;left:160px;top:160px;width:1px;height:20px;background:rgba(0,0,0,0.06)"></div>
<div style="position:absolute;left:4px;top:164px;width:12px;height:11px"><svg width="12" height="11" viewBox="0 0 12 11"><path d="M3.5 0.5 L8.5 0.5 L8.5 5 L11.5 5 L6 10.5 L0.5 5 L3.5 5 Z" fill="#f07a2a" stroke="#c04a10" stroke-width="0.8"/><path d="M4.3 1.3 L7.7 1.3 L7.7 4.6 L4.3 4.6Z" fill="#ffb070"/></svg></div>
<div class="t" style="left:21px;top:165px;font-size:11px;color:#111">SILVER</div>
<div class="t" style="left:96px;top:165px;width:62px;text-align:right;font-size:11px;color:#c44a28">21.732</div>
<div class="t" style="left:160px;top:165px;width:63px;text-align:right;font-size:11px;color:#c44a28">21.758</div>
<div style="position:absolute;left:0;top:180px;width:227px;height:20px;background:#fdf4c4"></div>
<div style="position:absolute;left:0;top:199px;width:227px;height:1px;background:rgba(0,0,0,0.07)"></div>
<div style="position:absolute;left:96px;top:180px;width:1px;height:20px;background:rgba(0,0,0,0.06)"></div>
<div style="position:absolute;left:160px;top:180px;width:1px;height:20px;background:rgba(0,0,0,0.06)"></div>
<div style="position:absolute;left:4px;top:184px;width:12px;height:11px"><svg width="12" height="11" viewBox="0 0 12 11"><path d="M3.5 0.5 L8.5 0.5 L8.5 5 L11.5 5 L6 10.5 L0.5 5 L3.5 5 Z" fill="#f07a2a" stroke="#c04a10" stroke-width="0.8"/><path d="M4.3 1.3 L7.7 1.3 L7.7 4.6 L4.3 4.6Z" fill="#ffb070"/></svg></div>
<div class="t" style="left:21px;top:185px;font-size:11px;color:#111">PLATINUM</div>
<div class="t" style="left:96px;top:185px;width:62px;text-align:right;font-size:11px;color:#c44a28">986.16</div>
<div class="t" style="left:160px;top:185px;width:63px;text-align:right;font-size:11px;color:#c44a28">992.50</div>
<div style="position:absolute;left:0;top:200px;width:227px;height:20px;background:#fdf4c4"></div>
<div style="position:absolute;left:0;top:219px;width:227px;height:1px;background:rgba(0,0,0,0.07)"></div>
<div style="position:absolute;left:96px;top:200px;width:1px;height:20px;background:rgba(0,0,0,0.06)"></div>
<div style="position:absolute;left:160px;top:200px;width:1px;height:20px;background:rgba(0,0,0,0.06)"></div>
<div style="position:absolute;left:4px;top:204px;width:12px;height:11px"><svg width="12" height="11" viewBox="0 0 12 11"><path d="M6 0.5 L11.5 6 L8.5 6 L8.5 10.5 L3.5 10.5 L3.5 6 L0.5 6 Z" fill="#22b02c" stroke="#0e7a16" stroke-width="0.8"/><path d="M6 2 L9 5.2 L3 5.2Z" fill="#8ae884"/></svg></div>
<div class="t" style="left:21px;top:205px;font-size:11px;color:#111">PALLADIUM</div>
<div class="t" style="left:96px;top:205px;width:62px;text-align:right;font-size:11px;color:#2a2a92">2041.05</div>
<div class="t" style="left:160px;top:205px;width:63px;text-align:right;font-size:11px;color:#2a2a92">2069.01</div>
<div style="position:absolute;left:0;top:220px;width:227px;height:20px;background:#c9c9c9"></div>
<div style="position:absolute;left:4px;top:224px;width:12px;height:11px"><svg width="12" height="11" viewBox="0 0 12 11"><path d="M3.5 0.5 L8.5 0.5 L8.5 5 L11.5 5 L6 10.5 L0.5 5 L3.5 5 Z" fill="#f07a2a" stroke="#c04a10" stroke-width="0.8"/><path d="M4.3 1.3 L7.7 1.3 L7.7 4.6 L4.3 4.6Z" fill="#ffb070"/></svg></div>
<div class="t" style="left:21px;top:225px;font-size:11px;color:#111">WTI</div>
<div class="t" style="left:96px;top:225px;width:62px;text-align:right;font-size:11px;color:#e0284c">102.441</div>
<div class="t" style="left:160px;top:225px;width:63px;text-align:right;font-size:11px;color:#e0284c">102.505</div>
<div style="position:absolute;left:0;top:240px;width:227px;height:20px;background:#c9c9c9"></div>
<div style="position:absolute;left:4px;top:244px;width:12px;height:11px"><svg width="12" height="11" viewBox="0 0 12 11"><path d="M3.5 0.5 L8.5 0.5 L8.5 5 L11.5 5 L6 10.5 L0.5 5 L3.5 5 Z" fill="#f07a2a" stroke="#c04a10" stroke-width="0.8"/><path d="M4.3 1.3 L7.7 1.3 L7.7 4.6 L4.3 4.6Z" fill="#ffb070"/></svg></div>
<div class="t" style="left:21px;top:245px;font-size:11px;color:#111">BRENT</div>
<div class="t" style="left:96px;top:245px;width:62px;text-align:right;font-size:11px;color:#e0284c">105.459</div>
<div class="t" style="left:160px;top:245px;width:63px;text-align:right;font-size:11px;color:#e0284c">105.523</div>
<div style="position:absolute;left:0;top:260px;width:227px;height:20px;background:#c9c9c9"></div>
<div style="position:absolute;left:4px;top:264px;width:12px;height:11px"><svg width="12" height="11" viewBox="0 0 12 11"><path d="M6 0.5 L11.5 6 L8.5 6 L8.5 10.5 L3.5 10.5 L3.5 6 L0.5 6 Z" fill="#22b02c" stroke="#0e7a16" stroke-width="0.8"/><path d="M6 2 L9 5.2 L3 5.2Z" fill="#8ae884"/></svg></div>
<div class="t" style="left:21px;top:265px;font-size:11px;color:#111">NAT.GAS</div>
<div class="t" style="left:96px;top:265px;width:62px;text-align:right;font-size:11px;color:#2c2cd0">7.648</div>
<div class="t" style="left:160px;top:265px;width:63px;text-align:right;font-size:11px;color:#2c2cd0">7.657</div>
<div style="position:absolute;left:0;top:280px;width:227px;height:20px;background:#fdf6e6"></div>
<div style="position:absolute;left:0;top:299px;width:227px;height:1px;background:rgba(0,0,0,0.07)"></div>
<div style="position:absolute;left:96px;top:280px;width:1px;height:20px;background:rgba(0,0,0,0.06)"></div>
<div style="position:absolute;left:160px;top:280px;width:1px;height:20px;background:rgba(0,0,0,0.06)"></div>
<div style="position:absolute;left:4px;top:284px;width:12px;height:11px"><svg width="12" height="11" viewBox="0 0 12 11"><path d="M6 0.5 L11.5 6 L8.5 6 L8.5 10.5 L3.5 10.5 L3.5 6 L0.5 6 Z" fill="#22b02c" stroke="#0e7a16" stroke-width="0.8"/><path d="M6 2 L9 5.2 L3 5.2Z" fill="#8ae884"/></svg></div>
<div class="t" style="left:21px;top:285px;font-size:11px;color:#111">#US30</div>
<div class="t" style="left:96px;top:285px;width:62px;text-align:right;font-size:11px;color:#2a2a92">32479.07</div>
<div class="t" style="left:160px;top:285px;width:63px;text-align:right;font-size:11px;color:#2a2a92">32480.82</div>
<div style="position:absolute;left:0;top:300px;width:227px;height:20px;background:#fdf6e6"></div>
<div style="position:absolute;left:0;top:319px;width:227px;height:1px;background:rgba(0,0,0,0.07)"></div>
<div style="position:absolute;left:96px;top:300px;width:1px;height:20px;background:rgba(0,0,0,0.06)"></div>
<div style="position:absolute;left:160px;top:300px;width:1px;height:20px;background:rgba(0,0,0,0.06)"></div>
<div style="position:absolute;left:4px;top:304px;width:12px;height:11px"><svg width="12" height="11" viewBox="0 0 12 11"><path d="M6 0.5 L11.5 6 L8.5 6 L8.5 10.5 L3.5 10.5 L3.5 6 L0.5 6 Z" fill="#22b02c" stroke="#0e7a16" stroke-width="0.8"/><path d="M6 2 L9 5.2 L3 5.2Z" fill="#8ae884"/></svg></div>
<div class="t" style="left:21px;top:305px;font-size:11px;color:#111">#USNDAQ...</div>
<div class="t" style="left:96px;top:305px;width:62px;text-align:right;font-size:11px;color:#2a2a92">12524.87</div>
<div class="t" style="left:160px;top:305px;width:63px;text-align:right;font-size:11px;color:#2a2a92">12526.12</div>
<div style="position:absolute;left:0;top:320px;width:227px;height:20px;background:#fdf6e6"></div>
<div style="position:absolute;left:0;top:339px;width:227px;height:1px;background:rgba(0,0,0,0.07)"></div>
<div style="position:absolute;left:96px;top:320px;width:1px;height:20px;background:rgba(0,0,0,0.06)"></div>
<div style="position:absolute;left:160px;top:320px;width:1px;height:20px;background:rgba(0,0,0,0.06)"></div>
<div style="position:absolute;left:4px;top:324px;width:12px;height:11px"><svg width="12" height="11" viewBox="0 0 12 11"><path d="M6 0.5 L11.5 6 L8.5 6 L8.5 10.5 L3.5 10.5 L3.5 6 L0.5 6 Z" fill="#22b02c" stroke="#0e7a16" stroke-width="0.8"/><path d="M6 2 L9 5.2 L3 5.2Z" fill="#8ae884"/></svg></div>
<div class="t" style="left:21px;top:325px;font-size:11px;color:#111">#Euro50</div>
<div class="t" style="left:96px;top:325px;width:62px;text-align:right;font-size:11px;color:#2a2a92">3619.32</div>
<div class="t" style="left:160px;top:325px;width:63px;text-align:right;font-size:11px;color:#2a2a92">3620.67</div>
<div style="position:absolute;left:0;top:340px;width:227px;height:20px;background:#fdf6e6"></div>
<div style="position:absolute;left:0;top:359px;width:227px;height:1px;background:rgba(0,0,0,0.07)"></div>
<div style="position:absolute;left:96px;top:340px;width:1px;height:20px;background:rgba(0,0,0,0.06)"></div>
<div style="position:absolute;left:160px;top:340px;width:1px;height:20px;background:rgba(0,0,0,0.06)"></div>
<div style="position:absolute;left:4px;top:344px;width:12px;height:11px"><svg width="12" height="11" viewBox="0 0 12 11"><path d="M6 0.5 L11.5 6 L8.5 6 L8.5 10.5 L3.5 10.5 L3.5 6 L0.5 6 Z" fill="#22b02c" stroke="#0e7a16" stroke-width="0.8"/><path d="M6 2 L9 5.2 L3 5.2Z" fill="#8ae884"/></svg></div>
<div class="t" style="left:21px;top:345px;font-size:11px;color:#111">#Germany40</div>
<div class="t" style="left:96px;top:345px;width:62px;text-align:right;font-size:11px;color:#2a2a92">13723.62</div>
<div class="t" style="left:160px;top:345px;width:63px;text-align:right;font-size:11px;color:#2a2a92">13725.27</div>
<div style="position:absolute;left:0;top:360px;width:227px;height:20px;background:#e6f4fb"></div>
<div style="position:absolute;left:0;top:379px;width:227px;height:1px;background:rgba(0,0,0,0.07)"></div>
<div style="position:absolute;left:96px;top:360px;width:1px;height:20px;background:rgba(0,0,0,0.06)"></div>
<div style="position:absolute;left:160px;top:360px;width:1px;height:20px;background:rgba(0,0,0,0.06)"></div>
<div style="position:absolute;left:4px;top:364px;width:12px;height:11px"><svg width="12" height="11" viewBox="0 0 12 11"><path d="M3.5 0.5 L8.5 0.5 L8.5 5 L11.5 5 L6 10.5 L0.5 5 L3.5 5 Z" fill="#f07a2a" stroke="#c04a10" stroke-width="0.8"/><path d="M4.3 1.3 L7.7 1.3 L7.7 4.6 L4.3 4.6Z" fill="#ffb070"/></svg></div>
<div class="t" style="left:21px;top:365px;font-size:11px;color:#111">#ChinaA50</div>
<div class="t" style="left:96px;top:365px;width:62px;text-align:right;font-size:11px;color:#d0304c">13115.00</div>
<div class="t" style="left:160px;top:365px;width:63px;text-align:right;font-size:11px;color:#d0304c">13165.00</div>
<div style="position:absolute;left:0;top:380px;width:227px;height:20px;background:#fcc8d0"></div>
<div style="position:absolute;left:0;top:399px;width:227px;height:1px;background:rgba(0,0,0,0.07)"></div>
<div style="position:absolute;left:96px;top:380px;width:1px;height:20px;background:rgba(0,0,0,0.06)"></div>
<div style="position:absolute;left:160px;top:380px;width:1px;height:20px;background:rgba(0,0,0,0.06)"></div>
<div style="position:absolute;left:4px;top:384px;width:12px;height:11px"><svg width="12" height="11" viewBox="0 0 12 11"><path d="M6 0.5 L11.5 6 L8.5 6 L8.5 10.5 L3.5 10.5 L3.5 6 L0.5 6 Z" fill="#22b02c" stroke="#0e7a16" stroke-width="0.8"/><path d="M6 2 L9 5.2 L3 5.2Z" fill="#8ae884"/></svg></div>
<div class="t" style="left:21px;top:385px;font-size:11px;color:#111">BITCOIN</div>
<div class="t" style="left:96px;top:385px;width:62px;text-align:right;font-size:11px;color:#5a22c0">31444.63</div>
<div class="t" style="left:160px;top:385px;width:63px;text-align:right;font-size:11px;color:#5a22c0">31507.40</div>
<div style="position:absolute;left:0;top:400px;width:227px;height:20px;background:#fcc8d0"></div>
<div style="position:absolute;left:0;top:419px;width:227px;height:1px;background:rgba(0,0,0,0.07)"></div>
<div style="position:absolute;left:96px;top:400px;width:1px;height:20px;background:rgba(0,0,0,0.06)"></div>
<div style="position:absolute;left:160px;top:400px;width:1px;height:20px;background:rgba(0,0,0,0.06)"></div>
<div style="position:absolute;left:4px;top:404px;width:12px;height:11px"><svg width="12" height="11" viewBox="0 0 12 11"><path d="M6 0.5 L11.5 6 L8.5 6 L8.5 10.5 L3.5 10.5 L3.5 6 L0.5 6 Z" fill="#22b02c" stroke="#0e7a16" stroke-width="0.8"/><path d="M6 2 L9 5.2 L3 5.2Z" fill="#8ae884"/></svg></div>
<div class="t" style="left:21px;top:405px;font-size:11px;color:#111">ETHEREUM</div>
<div class="t" style="left:96px;top:405px;width:62px;text-align:right;font-size:11px;color:#5a22c0">2402.10</div>
<div class="t" style="left:160px;top:405px;width:63px;text-align:right;font-size:11px;color:#5a22c0">2407.74</div>
<div style="position:absolute;left:0;top:420px;width:227px;height:20px;background:#fcc8d0"></div>
<div style="position:absolute;left:0;top:439px;width:227px;height:1px;background:rgba(0,0,0,0.07)"></div>
<div style="position:absolute;left:96px;top:420px;width:1px;height:20px;background:rgba(0,0,0,0.06)"></div>
<div style="position:absolute;left:160px;top:420px;width:1px;height:20px;background:rgba(0,0,0,0.06)"></div>
<div style="position:absolute;left:4px;top:424px;width:12px;height:11px"><svg width="12" height="11" viewBox="0 0 12 11"><path d="M3.5 0.5 L8.5 0.5 L8.5 5 L11.5 5 L6 10.5 L0.5 5 L3.5 5 Z" fill="#f07a2a" stroke="#c04a10" stroke-width="0.8"/><path d="M4.3 1.3 L7.7 1.3 L7.7 4.6 L4.3 4.6Z" fill="#ffb070"/></svg></div>
<div class="t" style="left:21px;top:425px;font-size:11px;color:#111">LITECOIN</div>
<div class="t" style="left:96px;top:425px;width:62px;text-align:right;font-size:11px;color:#d8304a">78.86</div>
<div class="t" style="left:160px;top:425px;width:63px;text-align:right;font-size:11px;color:#d8304a">79.32</div>
<div style="position:absolute;left:0;top:440px;width:227px;height:20px;background:#fcc8d0"></div>
<div style="position:absolute;left:0;top:459px;width:227px;height:1px;background:rgba(0,0,0,0.07)"></div>
<div style="position:absolute;left:96px;top:440px;width:1px;height:20px;background:rgba(0,0,0,0.06)"></div>
<div style="position:absolute;left:160px;top:440px;width:1px;height:20px;background:rgba(0,0,0,0.06)"></div>
<div style="position:absolute;left:4px;top:444px;width:12px;height:11px"><svg width="12" height="11" viewBox="0 0 12 11"><path d="M6 0.5 L11.5 6 L8.5 6 L8.5 10.5 L3.5 10.5 L3.5 6 L0.5 6 Z" fill="#22b02c" stroke="#0e7a16" stroke-width="0.8"/><path d="M6 2 L9 5.2 L3 5.2Z" fill="#8ae884"/></svg></div>
<div class="t" style="left:21px;top:445px;font-size:11px;color:#111">DOGECOIN</div>
<div class="t" style="left:96px;top:445px;width:62px;text-align:right;font-size:11px;color:#5a22c0">0.10072</div>
<div class="t" style="left:160px;top:445px;width:63px;text-align:right;font-size:11px;color:#5a22c0">0.10154</div>
<div style="position:absolute;left:0;top:460px;width:227px;height:20px;background:#fcc8d0"></div>
<div style="position:absolute;left:0;top:479px;width:227px;height:1px;background:rgba(0,0,0,0.07)"></div>
<div style="position:absolute;left:96px;top:460px;width:1px;height:20px;background:rgba(0,0,0,0.06)"></div>
<div style="position:absolute;left:160px;top:460px;width:1px;height:20px;background:rgba(0,0,0,0.06)"></div>
<div style="position:absolute;left:4px;top:464px;width:12px;height:11px"><svg width="12" height="11" viewBox="0 0 12 11"><path d="M3.5 0.5 L8.5 0.5 L8.5 5 L11.5 5 L6 10.5 L0.5 5 L3.5 5 Z" fill="#f07a2a" stroke="#c04a10" stroke-width="0.8"/><path d="M4.3 1.3 L7.7 1.3 L7.7 4.6 L4.3 4.6Z" fill="#ffb070"/></svg></div>
<div class="t" style="left:21px;top:465px;font-size:11px;color:#111">SOLANA</div>
<div class="t" style="left:96px;top:465px;width:62px;text-align:right;font-size:11px;color:#d8304a">61.031</div>
<div class="t" style="left:160px;top:465px;width:63px;text-align:right;font-size:11px;color:#d8304a">61.266</div>
<div style="position:absolute;left:0;top:480px;width:227px;height:20px;background:#fcc8d0"></div>
<div style="position:absolute;left:0;top:499px;width:227px;height:1px;background:rgba(0,0,0,0.07)"></div>
<div style="position:absolute;left:96px;top:480px;width:1px;height:20px;background:rgba(0,0,0,0.06)"></div>
<div style="position:absolute;left:160px;top:480px;width:1px;height:20px;background:rgba(0,0,0,0.06)"></div>
<div style="position:absolute;left:4px;top:484px;width:12px;height:11px"><svg width="12" height="11" viewBox="0 0 12 11"><path d="M3.5 0.5 L8.5 0.5 L8.5 5 L11.5 5 L6 10.5 L0.5 5 L3.5 5 Z" fill="#f07a2a" stroke="#c04a10" stroke-width="0.8"/><path d="M4.3 1.3 L7.7 1.3 L7.7 4.6 L4.3 4.6Z" fill="#ffb070"/></svg></div>
<div class="t" style="left:21px;top:485px;font-size:11px;color:#111">CARDANO</div>
<div class="t" style="left:96px;top:485px;width:62px;text-align:right;font-size:11px;color:#d8304a">0.607</div>
<div class="t" style="left:160px;top:485px;width:63px;text-align:right;font-size:11px;color:#d8304a">0.630</div>
<div style="position:absolute;left:0;top:500px;width:227px;height:20px;background:#74f2c8"></div>
<div style="position:absolute;left:0;top:519px;width:227px;height:1px;background:rgba(0,0,0,0.07)"></div>
<div style="position:absolute;left:96px;top:500px;width:1px;height:20px;background:rgba(0,0,0,0.06)"></div>
<div style="position:absolute;left:160px;top:500px;width:1px;height:20px;background:rgba(0,0,0,0.06)"></div>
<div style="position:absolute;left:4px;top:504px;width:12px;height:11px"><svg width="12" height="11" viewBox="0 0 12 11"><path d="M6 0.5 L11.5 6 L8.5 6 L8.5 10.5 L3.5 10.5 L3.5 6 L0.5 6 Z" fill="#22b02c" stroke="#0e7a16" stroke-width="0.8"/><path d="M6 2 L9 5.2 L3 5.2Z" fill="#8ae884"/></svg></div>
<div class="t" style="left:21px;top:505px;font-size:11px;color:#111">BNPP.PA</div>
<div class="t" style="left:96px;top:505px;width:62px;text-align:right;font-size:11px;color:#1050b8">51.87</div>
<div class="t" style="left:160px;top:505px;width:63px;text-align:right;font-size:11px;color:#1050b8">52.01</div>
<div style="position:absolute;left:0;top:520px;width:227px;height:20px;background:#74f2c8"></div>
<div style="position:absolute;left:0;top:539px;width:227px;height:1px;background:rgba(0,0,0,0.07)"></div>
<div style="position:absolute;left:96px;top:520px;width:1px;height:20px;background:rgba(0,0,0,0.06)"></div>
<div style="position:absolute;left:160px;top:520px;width:1px;height:20px;background:rgba(0,0,0,0.06)"></div>
<div style="position:absolute;left:4px;top:524px;width:12px;height:11px"><svg width="12" height="11" viewBox="0 0 12 11"><path d="M6 0.5 L11.5 6 L8.5 6 L8.5 10.5 L3.5 10.5 L3.5 6 L0.5 6 Z" fill="#22b02c" stroke="#0e7a16" stroke-width="0.8"/><path d="M6 2 L9 5.2 L3 5.2Z" fill="#8ae884"/></svg></div>
<div class="t" style="left:21px;top:525px;font-size:11px;color:#111">AIRF.PA</div>
<div class="t" style="left:96px;top:525px;width:62px;text-align:right;font-size:11px;color:#1050b8">3.86</div>
<div class="t" style="left:160px;top:525px;width:63px;text-align:right;font-size:11px;color:#1050b8">3.90</div>
<div style="position:absolute;left:0;top:540px;width:227px;height:20px;background:#74f2c8"></div>
<div style="position:absolute;left:0;top:559px;width:227px;height:1px;background:rgba(0,0,0,0.07)"></div>
<div style="position:absolute;left:96px;top:540px;width:1px;height:20px;background:rgba(0,0,0,0.06)"></div>
<div style="position:absolute;left:160px;top:540px;width:1px;height:20px;background:rgba(0,0,0,0.06)"></div>
<div style="position:absolute;left:4px;top:544px;width:12px;height:11px"><svg width="12" height="11" viewBox="0 0 12 11"><path d="M6 0.5 L11.5 6 L8.5 6 L8.5 10.5 L3.5 10.5 L3.5 6 L0.5 6 Z" fill="#22b02c" stroke="#0e7a16" stroke-width="0.8"/><path d="M6 2 L9 5.2 L3 5.2Z" fill="#8ae884"/></svg></div>
<div class="t" style="left:21px;top:545px;font-size:11px;color:#111">OREP.PA</div>
<div class="t" style="left:96px;top:545px;width:62px;text-align:right;font-size:11px;color:#1050b8">317.67</div>
<div class="t" style="left:160px;top:545px;width:63px;text-align:right;font-size:11px;color:#1050b8">318.12</div>
<div style="position:absolute;left:0;top:560px;width:227px;height:20px;background:#86cdf3"></div>
<div style="position:absolute;left:0;top:579px;width:227px;height:1px;background:rgba(0,0,0,0.07)"></div>
<div style="position:absolute;left:96px;top:560px;width:1px;height:20px;background:rgba(0,0,0,0.06)"></div>
<div style="position:absolute;left:160px;top:560px;width:1px;height:20px;background:rgba(0,0,0,0.06)"></div>
<div style="position:absolute;left:4px;top:564px;width:12px;height:11px"><svg width="12" height="11" viewBox="0 0 12 11"><path d="M3.5 0.5 L8.5 0.5 L8.5 5 L11.5 5 L6 10.5 L0.5 5 L3.5 5 Z" fill="#f07a2a" stroke="#c04a10" stroke-width="0.8"/><path d="M4.3 1.3 L7.7 1.3 L7.7 4.6 L4.3 4.6Z" fill="#ffb070"/></svg></div>
<div class="t" style="left:21px;top:565px;font-size:11px;color:#111">BMWG.DE</div>
<div class="t" style="left:96px;top:565px;width:62px;text-align:right;font-size:11px;color:#c03070">81.24</div>
<div class="t" style="left:160px;top:565px;width:63px;text-align:right;font-size:11px;color:#c03070">81.43</div>
</div>
<div style="position:absolute;left:228px;top:115px;width:18px;height:598px;background:#f0f0f0"></div>
<div style="position:absolute;left:229px;top:133px;width:14px;height:342px;background:#cdcdcd"></div>
<svg style="position:absolute;left:231px;top:119px" width="10" height="7"><path d="M1 6 L5 2 L9 6" stroke="#606060" stroke-width="1.6" fill="none"/></svg>
<svg style="position:absolute;left:231px;top:701px" width="10" height="7"><path d="M1 1 L5 5 L9 1" stroke="#606060" stroke-width="1.6" fill="none"/></svg>
<div style="position:absolute;left:246px;top:98px;width:2px;height:640px;background:#f0f0f0"></div>
<div style="position:absolute;left:0px;top:713px;width:246px;height:1px;background:#000"></div>
<div style="position:absolute;left:3px;top:713px;width:64px;height:19px;background:#fff;border:1px solid #000;border-top:none;box-sizing:border-box"></div>
<div class="t" style="left:13px;top:717px;font-size:12px;color:#000;">Symbols</div>
<div class="t" style="left:78px;top:717px;font-size:12px;color:#8a8a8a;">Tick Chart</div>
<div style="position:absolute;left:141px;top:717px;width:1px;height:14px;background:#777"></div>
<div style="position:absolute;left:0px;top:737px;width:248px;height:1px;background:#c8c8c8"></div>
<div style="position:absolute;left:0px;top:739px;width:246px;height:16px;background:linear-gradient(to right,#c9d6e6,#dce7f3 60%,#eef3f9)"></div>
<div class="t" style="left:2px;top:741px;font-size:11px;color:#1a1a1a;">Navigator</div>
<svg style="position:absolute;left:235px;top:743px" width="8" height="8"><path d="M1 1 L7 7 M7 1 L1 7" stroke="#000" stroke-width="1.8"/></svg>
<div style="position:absolute;left:0px;top:755px;width:246px;height:99px;background:#fff;border-left:1px solid #a8a8a8;border-top:1px solid #d0d0d0;box-sizing:border-box"></div>
<svg style="position:absolute;left:0;top:756px" width="60" height="96"><rect x="7.5" y="2.5" width="10" height="8" fill="#d4eefb" stroke="#6aa2c8"/><path d="M9 7 L11 5 L13 7 L15 5" stroke="#6aa2c8" fill="none"/><rect x="11.5" y="7.5" width="10" height="8" fill="#e6f6fd" stroke="#6aa2c8"/><path d="M13 12 L15 10 L17 13 L19 10" stroke="#6aa2c8" fill="none"/><path d="M14.5 19 V84" stroke="#777" stroke-dasharray="1 1"/><path d="M15 29.5 H26 M20 47.5 H26 M20 65.5 H26 M20 84.5 H26" stroke="#777" stroke-dasharray="1 1"/><rect x="10.5" y="43.5" width="9" height="9" fill="#fff" stroke="#8a8a8a"/><path d="M12 48.5 H18 M15.5 45.5 V51.5" stroke="#222"/><rect x="10.5" y="61.5" width="9" height="9" fill="#fff" stroke="#8a8a8a"/><path d="M12 66.5 H18 M15.5 63.5 V69.5" stroke="#222"/><rect x="10.5" y="80.5" width="9" height="9" fill="#fff" stroke="#8a8a8a"/><path d="M12 85.5 H18 M15.5 82.5 V88.5" stroke="#222"/><circle cx="33" cy="23" r="3.5" fill="#f0c828" stroke="#a88a10"/><path d="M28 34 Q28 27 33 27 Q38 27 38 34Z" fill="#f0c828" stroke="#a88a10"/><circle cx="38" cy="25" r="3.5" fill="#f4d030" stroke="#a88a10"/><path d="M33 36 Q33 29 38 29 Q43 29 43 36Z" fill="#f4d030" stroke="#a88a10"/><circle cx="30" cy="31.5" r="4" fill="#28c030" stroke="#118018"/><rect x="27.5" y="38.5" width="13" height="13" rx="2" fill="#f6d84a" stroke="#b89a20"/><path d="M36 41 Q33.5 40.5 33 44 L32 48 Q31.5 50 30 49.5" stroke="#8a5a10" fill="none" stroke-width="1.2"/><path d="M31 44.5 H35" stroke="#8a5a10"/><ellipse cx="34.5" cy="60" rx="7.5" ry="3" fill="#5ab0e8" stroke="#2a70a8"/><ellipse cx="34.5" cy="58" rx="3.5" ry="2.5" fill="#7ac8f4" stroke="#2a70a8"/><path d="M30 63 H39 L37 68 H32Z" fill="#f0d040" stroke="#a08010"/><path d="M37 66 L42 70 L39 73 L35 69Z" fill="#f4e060" stroke="#a08010"/><path d="M28.5 76.5 H39.5 V87.5 H28.5Z" fill="#f4dc50" stroke="#a88a10"/><path d="M28 76 Q27 79 29.5 79 M39 76 Q41 79 38.5 79" stroke="#a88a10" fill="none"/><path d="M37 84 L41 87 L38 91 L34 88Z" fill="#f4e060" stroke="#a08010"/></svg>
<div class="t" style="left:28px;top:760px;font-size:12px;color:#000;">FxPro MT4</div>
<div class="t" style="left:49px;top:778px;font-size:12px;color:#000;">Accounts</div>
<div class="t" style="left:49px;top:796px;font-size:12px;color:#000;">Indicators</div>
<div class="t" style="left:49px;top:814px;font-size:12px;color:#000;">Expert Advisors</div>
<div class="t" style="left:49px;top:832px;font-size:12px;color:#000;">Scripts</div>
<div style="position:absolute;left:0px;top:854px;width:248px;height:31px;background:#f0f0f0"></div>
<div style="position:absolute;left:0px;top:854px;width:246px;height:1px;background:#000"></div>
<div style="position:absolute;left:3px;top:854px;width:70px;height:20px;background:#fff;border:1px solid #000;border-top:none;box-sizing:border-box"></div>
<div class="t" style="left:12px;top:858px;font-size:12px;color:#000;">Common</div>
<div class="t" style="left:84px;top:858px;font-size:12px;color:#8a8a8a;">Favorites</div>
<div style="position:absolute;left:141px;top:858px;width:1px;height:14px;background:#777"></div>
<div style="position:absolute;left:250px;top:98px;width:832px;height:441px;background:#d0dbe7;border-top:1px solid #4a4a4a;border-right:1px solid #3a3a3a;border-bottom:1px solid #3a3a3a;box-sizing:border-box;border-top-left-radius:6px;border-top-right-radius:6px"></div>
<div style="position:absolute;left:251px;top:99px;width:830px;height:31px;background:linear-gradient(to bottom,#d2dde9,#c6d5e6 40%,#d8e2ed);border-top-left-radius:6px;border-top-right-radius:6px"></div>
<div style="position:absolute;left:261px;top:111px;width:15px;height:15px"><svg width="15" height="15" viewBox="0 0 15 15"><rect x="0.5" y="0.5" width="11" height="8" fill="#d8eefa" stroke="#5a8ab0"/><path d="M2 6 L4 3 L6 5 L8 2" stroke="#5a8ab0" fill="none"/><rect x="3.5" y="5.5" width="11" height="9" fill="#eaf7fd" stroke="#5a8ab0"/><path d="M5.5 8.5 L7.5 12 L9.5 9 L11.5 12" stroke="#5a8ab0" fill="none"/></svg></div>
<div class="t" style="left:280px;top:112px;font-size:12px;color:#8da0b4;letter-spacing:-0.5px">EURUSD,H1</div>
<div style="position:absolute;left:973px;top:109px;width:31px;height:18px;background:linear-gradient(#dfe8f2,#c9d6e4);border:1px solid #8c9cb0;border-radius:3px;box-sizing:border-box"></div>
<div style="position:absolute;left:1007px;top:109px;width:31px;height:18px;background:linear-gradient(#dfe8f2,#c9d6e4);border:1px solid #8c9cb0;border-radius:3px;box-sizing:border-box"></div>
<div style="position:absolute;left:1041px;top:109px;width:31px;height:18px;background:linear-gradient(#dfe8f2,#c9d6e4);border:1px solid #8c9cb0;border-radius:3px;box-sizing:border-box"></div>
<div style="position:absolute;left:983px;top:118px;width:10px;height:4px;border:1px solid #3a4a5a;background:#fff;box-sizing:border-box;border-radius:1px"></div>
<div style="position:absolute;left:1017px;top:113px;width:11px;height:9px;border:1px solid #3a4a5a;background:#fff;box-sizing:border-box;border-radius:1px"></div>
<div style="position:absolute;left:1020px;top:116px;width:5px;height:3px;border:1px solid #3a4a5a;box-sizing:border-box"></div>
<svg style="position:absolute;left:1050px;top:112px" width="13" height="11"><path d="M2 1.5 L11 9.5 M11 1.5 L2 9.5" stroke="#3a4a5a" stroke-width="3.2" stroke-linecap="round"/><path d="M2 1.5 L11 9.5 M11 1.5 L2 9.5" stroke="#fff" stroke-width="1.4" stroke-linecap="round"/></svg>
<svg style="position:absolute;left:259px;top:131px" width="813" height="398" viewBox="259 131 813 398" shape-rendering="crispEdges"><rect x="259" y="131" width="813" height="398" fill="#000"/><path d="M351.5 135 V508" stroke="#fff" stroke-dasharray="3 2" stroke-width="1"/><path d="M359.5 135 V508" stroke="#fff" stroke-dasharray="3 2" stroke-width="1"/><path d="M551.5 135 V508" stroke="#fff" stroke-dasharray="3 2" stroke-width="1"/><path d="M743.5 135 V508" stroke="#fff" stroke-dasharray="3 2" stroke-width="1"/><path d="M935.5 135 V508" stroke="#fff" stroke-dasharray="3 2" stroke-width="1"/><path d="M262 318.5 H1026" stroke="#a8a8a8" stroke-width="1"/></svg>
<svg style="position:absolute;left:259px;top:131px" width="813" height="398" viewBox="259 131 813 398">
<clipPath id="c259131"><rect x="263" y="135" width="763" height="373"/></clipPath><g clip-path="url(#c259131)"><polyline points="263.5,187.5 271.5,250.5 279.5,304.5 287.5,246.5 295.5,213.5 303.5,246.5 311.5,255.5 319.5,315.5 327.5,326.5 335.5,325.5 343.5,302.5 351.5,347.5 359.5,359.5 367.5,378.5 375.5,418.5 383.5,403.5 391.5,461.5 399.5,449.5 407.5,442.5 415.5,459.5 423.5,475.5 431.5,443.5 439.5,458.5 447.5,397.5 455.5,333.5 463.5,325.5 471.5,276.5 479.5,375.5 487.5,391.5 495.5,293.5 503.5,236.5 511.5,290.5 519.5,264.5 527.5,290.5 535.5,286.5 543.5,293.5 551.5,297.5 559.5,273.5 567.5,288.5 575.5,277.5 583.5,241.5 591.5,222.5 599.5,232.5 607.5,228.5 615.5,281.5 623.5,293.5 631.5,243.5 639.5,352.5 647.5,307.5 655.5,306.5 663.5,311.5 671.5,271.5 679.5,320.5 687.5,350.5 695.5,380.5 703.5,369.5 711.5,359.5 719.5,381.5 727.5,365.5 735.5,395.5 743.5,388.5 751.5,376.5 759.5,386.5 767.5,379.5 775.5,371.5 783.5,367.5 791.5,361.5 799.5,345.5 807.5,331.5 815.5,344.5 823.5,309.5 831.5,257.5 839.5,273.5 847.5,328.5 855.5,333.5 863.5,319.0" fill="none" stroke="#8fdc8f" stroke-width="1"/></g></svg>
<svg style="position:absolute;left:259px;top:131px" width="813" height="398" viewBox="259 131 813 398" shape-rendering="crispEdges"><path d="M262.5 134 V508.5 H1026.5 V134.5 H262" stroke="#fff" fill="none" stroke-width="1"/><path d="M1026 139.5 H1030" stroke="#fff"/><path d="M1026 172.5 H1030" stroke="#fff"/><path d="M1026 205.5 H1030" stroke="#fff"/><path d="M1026 239.5 H1030" stroke="#fff"/><path d="M1026 272.5 H1030" stroke="#fff"/><path d="M1026 305.5 H1030" stroke="#fff"/><path d="M1026 338.5 H1030" stroke="#fff"/><path d="M1026 371.5 H1030" stroke="#fff"/><path d="M1026 405.5 H1030" stroke="#fff"/><path d="M1026 438.5 H1030" stroke="#fff"/><path d="M1026 471.5 H1030" stroke="#fff"/><path d="M1026 504.5 H1030" stroke="#fff"/><path d="M262.5 508 V513" stroke="#fff"/><path d="M326.5 508 V513" stroke="#fff"/><path d="M390.5 508 V513" stroke="#fff"/><path d="M454.5 508 V513" stroke="#fff"/><path d="M518.5 508 V513" stroke="#fff"/><path d="M582.5 508 V513" stroke="#fff"/><path d="M646.5 508 V513" stroke="#fff"/><path d="M710.5 508 V513" stroke="#fff"/><path d="M774.5 508 V513" stroke="#fff"/><path d="M838.5 508 V513" stroke="#fff"/><path d="M866 135 H876 L871 141 Z" fill="#808080" shape-rendering="auto"/></svg>
<div class="t" style="left:1032px;top:135px;font-size:10px;color:#fff;letter-spacing:-0.3px">1.06030</div>
<div class="t" style="left:1032px;top:168px;font-size:10px;color:#fff;letter-spacing:-0.3px">1.05930</div>
<div class="t" style="left:1032px;top:201px;font-size:10px;color:#fff;letter-spacing:-0.3px">1.05830</div>
<div class="t" style="left:1032px;top:235px;font-size:10px;color:#fff;letter-spacing:-0.3px">1.05730</div>
<div class="t" style="left:1032px;top:268px;font-size:10px;color:#fff;letter-spacing:-0.3px">1.05630</div>
<div class="t" style="left:1032px;top:301px;font-size:10px;color:#fff;letter-spacing:-0.3px">1.05530</div>
<div class="t" style="left:1032px;top:334px;font-size:10px;color:#fff;letter-spacing:-0.3px">1.05430</div>
<div class="t" style="left:1032px;top:367px;font-size:10px;color:#fff;letter-spacing:-0.3px">1.05330</div>
<div class="t" style="left:1032px;top:401px;font-size:10px;color:#fff;letter-spacing:-0.3px">1.05230</div>
<div class="t" style="left:1032px;top:434px;font-size:10px;color:#fff;letter-spacing:-0.3px">1.05130</div>
<div class="t" style="left:1032px;top:467px;font-size:10px;color:#fff;letter-spacing:-0.3px">1.05030</div>
<div class="t" style="left:1032px;top:500px;font-size:10px;color:#fff;letter-spacing:-0.3px">1.04930</div>
<div class="t" style="left:1028px;top:313px;font-size:10px;color:#000;"></div>
<div class="t" style="left:263px;top:513px;font-size:10px;color:#fff;letter-spacing:-0.3px">6 May 2022</div>
<div class="t" style="left:327px;top:513px;font-size:10px;color:#fff;letter-spacing:-0.3px">6 May 20:00</div>
<div class="t" style="left:391px;top:513px;font-size:10px;color:#fff;letter-spacing:-0.3px">9 May 04:00</div>
<div class="t" style="left:455px;top:513px;font-size:10px;color:#fff;letter-spacing:-0.3px">9 May 12:00</div>
<div class="t" style="left:519px;top:513px;font-size:10px;color:#fff;letter-spacing:-0.3px">9 May 20:00</div>
<div class="t" style="left:583px;top:513px;font-size:10px;color:#fff;letter-spacing:-0.3px">10 May 04:00</div>
<div class="t" style="left:647px;top:513px;font-size:10px;color:#fff;letter-spacing:-0.3px">10 May 12:00</div>
<div class="t" style="left:711px;top:513px;font-size:10px;color:#fff;letter-spacing:-0.3px">10 May 20:00</div>
<div class="t" style="left:775px;top:513px;font-size:10px;color:#fff;letter-spacing:-0.3px">11 May 04:00</div>
<div class="t" style="left:839px;top:513px;font-size:10px;color:#fff;letter-spacing:-0.3px">11 May 12:00</div>
<div class="t" style="left:268px;top:138px;font-size:10px;color:#fff;letter-spacing:-0.25px">EURUSD,H1&nbsp; 1.05449 1.05491 1.05445 1.05491</div>
<div style="position:absolute;left:1028px;top:312px;width:41px;height:12px;background:#fff"></div>
<div class="t" style="left:1032px;top:314px;font-size:10px;color:#000;letter-spacing:-0.3px">1.05491</div>
<div style="position:absolute;left:250px;top:539px;width:832px;height:341px;background:#d0dbe7;border-top:1px solid #4a4a4a;border-right:1px solid #3a3a3a;border-bottom:1px solid #3a3a3a;box-sizing:border-box;border-top-left-radius:6px;border-top-right-radius:6px"></div>
<div style="position:absolute;left:251px;top:540px;width:830px;height:31px;background:linear-gradient(to bottom,#d2dde9,#c6d5e6 40%,#d8e2ed);border-top-left-radius:6px;border-top-right-radius:6px"></div>
<div style="position:absolute;left:261px;top:552px;width:15px;height:15px"><svg width="15" height="15" viewBox="0 0 15 15"><rect x="0.5" y="0.5" width="11" height="8" fill="#d8eefa" stroke="#5a8ab0"/><path d="M2 6 L4 3 L6 5 L8 2" stroke="#5a8ab0" fill="none"/><rect x="3.5" y="5.5" width="11" height="9" fill="#eaf7fd" stroke="#5a8ab0"/><path d="M5.5 8.5 L7.5 12 L9.5 9 L11.5 12" stroke="#5a8ab0" fill="none"/></svg></div>
<div class="t" style="left:280px;top:553px;font-size:12px;color:#8da0b4;letter-spacing:-0.5px">GOLD,H1</div>
<div style="position:absolute;left:973px;top:550px;width:31px;height:18px;background:linear-gradient(#dfe8f2,#c9d6e4);border:1px solid #8c9cb0;border-radius:3px;box-sizing:border-box"></div>
<div style="position:absolute;left:1007px;top:550px;width:31px;height:18px;background:linear-gradient(#dfe8f2,#c9d6e4);border:1px solid #8c9cb0;border-radius:3px;box-sizing:border-box"></div>
<div style="position:absolute;left:1041px;top:550px;width:31px;height:18px;background:linear-gradient(#dfe8f2,#c9d6e4);border:1px solid #8c9cb0;border-radius:3px;box-sizing:border-box"></div>
<div style="position:absolute;left:983px;top:559px;width:10px;height:4px;border:1px solid #3a4a5a;background:#fff;box-sizing:border-box;border-radius:1px"></div>
<div style="position:absolute;left:1017px;top:554px;width:11px;height:9px;border:1px solid #3a4a5a;background:#fff;box-sizing:border-box;border-radius:1px"></div>
<div style="position:absolute;left:1020px;top:557px;width:5px;height:3px;border:1px solid #3a4a5a;box-sizing:border-box"></div>
<svg style="position:absolute;left:1050px;top:553px" width="13" height="11"><path d="M2 1.5 L11 9.5 M11 1.5 L2 9.5" stroke="#3a4a5a" stroke-width="3.2" stroke-linecap="round"/><path d="M2 1.5 L11 9.5 M11 1.5 L2 9.5" stroke="#fff" stroke-width="1.4" stroke-linecap="round"/></svg>
<svg style="position:absolute;left:259px;top:571px" width="813" height="290" viewBox="259 571 813 290" shape-rendering="crispEdges"><rect x="259" y="571" width="813" height="290" fill="#000"/><path d="M375.5 576 V900" stroke="#fff" stroke-dasharray="3 2" stroke-width="1"/><path d="M559.5 576 V900" stroke="#fff" stroke-dasharray="3 2" stroke-width="1"/><path d="M751.5 576 V900" stroke="#fff" stroke-dasharray="3 2" stroke-width="1"/><path d="M935.5 576 V900" stroke="#fff" stroke-dasharray="3 2" stroke-width="1"/><path d="M262 833.5 H1026" stroke="#a8a8a8" stroke-width="1"/></svg>
<svg style="position:absolute;left:259px;top:571px" width="813" height="290" viewBox="259 571 813 290">
<clipPath id="c259571"><rect x="263" y="576" width="763" height="324"/></clipPath><g clip-path="url(#c259571)"><g shape-rendering="crispEdges"><rect x="263" y="682" width="1" height="23" fill="#52c852"/><rect x="261" y="698" width="5" height="7" fill="#52c852"/><rect x="262" y="699" width="3" height="5" fill="#000"/><rect x="271" y="654" width="1" height="51" fill="#52c852"/><rect x="269" y="654" width="5" height="46" fill="#52c852"/><rect x="270" y="655" width="3" height="44" fill="#000"/><rect x="279" y="637" width="1" height="25" fill="#52c852"/><rect x="277" y="647" width="5" height="9" fill="#52c852"/><rect x="278" y="648" width="3" height="7" fill="#000"/><rect x="287" y="636" width="1" height="21" fill="#52c852"/><rect x="285" y="637" width="5" height="12" fill="#52c852"/><rect x="286" y="638" width="3" height="10" fill="#000"/><rect x="295" y="634" width="1" height="24" fill="#52c852"/><rect x="293" y="637" width="5" height="19" fill="#52c852"/><rect x="294" y="638" width="3" height="17" fill="#a8f0a0"/><rect x="303" y="607" width="1" height="80" fill="#52c852"/><rect x="301" y="654" width="5" height="32" fill="#52c852"/><rect x="302" y="655" width="3" height="30" fill="#a8f0a0"/><rect x="311" y="633" width="1" height="65" fill="#52c852"/><rect x="309" y="659" width="5" height="27" fill="#52c852"/><rect x="310" y="660" width="3" height="25" fill="#000"/><rect x="319" y="621" width="1" height="47" fill="#52c852"/><rect x="317" y="632" width="5" height="29" fill="#52c852"/><rect x="318" y="633" width="3" height="27" fill="#000"/><rect x="327" y="593" width="1" height="50" fill="#52c852"/><rect x="325" y="628" width="5" height="6" fill="#52c852"/><rect x="326" y="629" width="3" height="4" fill="#000"/><rect x="335" y="608" width="1" height="23" fill="#52c852"/><rect x="333" y="615" width="5" height="15" fill="#52c852"/><rect x="334" y="616" width="3" height="13" fill="#000"/><rect x="343" y="613" width="1" height="43" fill="#52c852"/><rect x="341" y="614" width="5" height="39" fill="#52c852"/><rect x="342" y="615" width="3" height="37" fill="#a8f0a0"/><rect x="351" y="641" width="1" height="14" fill="#52c852"/><rect x="349" y="650" width="5" height="4" fill="#52c852"/><rect x="350" y="651" width="3" height="2" fill="#000"/><rect x="359" y="637" width="1" height="25" fill="#52c852"/><rect x="357" y="650" width="5" height="11" fill="#52c852"/><rect x="358" y="651" width="3" height="9" fill="#a8f0a0"/><rect x="367" y="643" width="1" height="20" fill="#52c852"/><rect x="365" y="646" width="5" height="14" fill="#52c852"/><rect x="366" y="647" width="3" height="12" fill="#000"/><rect x="375" y="632" width="1" height="30" fill="#52c852"/><rect x="373" y="647" width="5" height="11" fill="#52c852"/><rect x="374" y="648" width="3" height="9" fill="#a8f0a0"/><rect x="383" y="649" width="1" height="17" fill="#52c852"/><rect x="381" y="657" width="5" height="3" fill="#52c852"/><rect x="382" y="658" width="3" height="1" fill="#a8f0a0"/><rect x="391" y="653" width="1" height="26" fill="#52c852"/><rect x="389" y="658" width="5" height="2" fill="#52c852"/><rect x="399" y="657" width="1" height="29" fill="#52c852"/><rect x="397" y="657" width="5" height="19" fill="#52c852"/><rect x="398" y="658" width="3" height="17" fill="#a8f0a0"/><rect x="407" y="672" width="1" height="30" fill="#52c852"/><rect x="405" y="674" width="5" height="23" fill="#52c852"/><rect x="406" y="675" width="3" height="21" fill="#a8f0a0"/><rect x="415" y="683" width="1" height="15" fill="#52c852"/><rect x="413" y="695" width="5" height="3" fill="#52c852"/><rect x="414" y="696" width="3" height="1" fill="#000"/><rect x="423" y="686" width="1" height="21" fill="#52c852"/><rect x="421" y="693" width="5" height="9" fill="#52c852"/><rect x="422" y="694" width="3" height="7" fill="#a8f0a0"/><rect x="431" y="700" width="1" height="19" fill="#52c852"/><rect x="429" y="701" width="5" height="12" fill="#52c852"/><rect x="430" y="702" width="3" height="10" fill="#a8f0a0"/><rect x="439" y="705" width="1" height="20" fill="#52c852"/><rect x="437" y="712" width="5" height="4" fill="#52c852"/><rect x="438" y="713" width="3" height="2" fill="#a8f0a0"/><rect x="447" y="706" width="1" height="37" fill="#52c852"/><rect x="445" y="713" width="5" height="12" fill="#52c852"/><rect x="446" y="714" width="3" height="10" fill="#a8f0a0"/><rect x="455" y="709" width="1" height="47" fill="#52c852"/><rect x="453" y="723" width="5" height="25" fill="#52c852"/><rect x="454" y="724" width="3" height="23" fill="#a8f0a0"/><rect x="463" y="737" width="1" height="30" fill="#52c852"/><rect x="461" y="746" width="5" height="13" fill="#52c852"/><rect x="462" y="747" width="3" height="11" fill="#a8f0a0"/><rect x="471" y="756" width="1" height="46" fill="#52c852"/><rect x="469" y="757" width="5" height="26" fill="#52c852"/><rect x="470" y="758" width="3" height="24" fill="#a8f0a0"/><rect x="479" y="767" width="1" height="33" fill="#52c852"/><rect x="477" y="777" width="5" height="6" fill="#52c852"/><rect x="478" y="778" width="3" height="4" fill="#000"/><rect x="487" y="727" width="1" height="56" fill="#52c852"/><rect x="485" y="754" width="5" height="24" fill="#52c852"/><rect x="486" y="755" width="3" height="22" fill="#000"/><rect x="495" y="713" width="1" height="59" fill="#52c852"/><rect x="493" y="754" width="5" height="8" fill="#52c852"/><rect x="494" y="755" width="3" height="6" fill="#a8f0a0"/><rect x="503" y="743" width="1" height="48" fill="#52c852"/><rect x="501" y="759" width="5" height="19" fill="#52c852"/><rect x="502" y="760" width="3" height="17" fill="#a8f0a0"/><rect x="511" y="759" width="1" height="33" fill="#52c852"/><rect x="509" y="771" width="5" height="7" fill="#52c852"/><rect x="510" y="772" width="3" height="5" fill="#000"/><rect x="519" y="745" width="1" height="35" fill="#52c852"/><rect x="517" y="771" width="5" height="4" fill="#52c852"/><rect x="518" y="772" width="3" height="2" fill="#a8f0a0"/><rect x="527" y="768" width="1" height="41" fill="#52c852"/><rect x="525" y="773" width="5" height="30" fill="#52c852"/><rect x="526" y="774" width="3" height="28" fill="#a8f0a0"/><rect x="535" y="786" width="1" height="30" fill="#52c852"/><rect x="533" y="801" width="5" height="16" fill="#52c852"/><rect x="534" y="802" width="3" height="14" fill="#a8f0a0"/><rect x="543" y="800" width="1" height="22" fill="#52c852"/><rect x="541" y="815" width="5" height="3" fill="#52c852"/><rect x="542" y="816" width="3" height="1" fill="#a8f0a0"/><rect x="551" y="809" width="1" height="18" fill="#52c852"/><rect x="549" y="815" width="5" height="3" fill="#52c852"/><rect x="550" y="816" width="3" height="1" fill="#a8f0a0"/><rect x="559" y="811" width="1" height="12" fill="#52c852"/><rect x="557" y="814" width="5" height="8" fill="#52c852"/><rect x="558" y="815" width="3" height="6" fill="#a8f0a0"/><rect x="567" y="808" width="1" height="14" fill="#52c852"/><rect x="565" y="809" width="5" height="13" fill="#52c852"/><rect x="566" y="810" width="3" height="11" fill="#000"/><rect x="575" y="803" width="1" height="19" fill="#52c852"/><rect x="573" y="811" width="5" height="3" fill="#52c852"/><rect x="574" y="812" width="3" height="1" fill="#a8f0a0"/><rect x="583" y="797" width="1" height="23" fill="#52c852"/><rect x="581" y="811" width="5" height="3" fill="#52c852"/><rect x="582" y="812" width="3" height="1" fill="#a8f0a0"/><rect x="591" y="770" width="1" height="43" fill="#52c852"/><rect x="589" y="778" width="5" height="35" fill="#52c852"/><rect x="590" y="779" width="3" height="33" fill="#000"/><rect x="599" y="754" width="1" height="32" fill="#52c852"/><rect x="597" y="754" width="5" height="25" fill="#52c852"/><rect x="598" y="755" width="3" height="23" fill="#000"/><rect x="607" y="748" width="1" height="19" fill="#52c852"/><rect x="605" y="755" width="5" height="8" fill="#52c852"/><rect x="606" y="756" width="3" height="6" fill="#a8f0a0"/><rect x="615" y="752" width="1" height="18" fill="#52c852"/><rect x="613" y="759" width="5" height="3" fill="#52c852"/><rect x="614" y="760" width="3" height="1" fill="#a8f0a0"/><rect x="623" y="748" width="1" height="33" fill="#52c852"/><rect x="621" y="760" width="5" height="22" fill="#52c852"/><rect x="622" y="761" width="3" height="20" fill="#a8f0a0"/><rect x="631" y="763" width="1" height="20" fill="#52c852"/><rect x="629" y="780" width="5" height="2" fill="#52c852"/><rect x="639" y="750" width="1" height="37" fill="#52c852"/><rect x="637" y="764" width="5" height="19" fill="#52c852"/><rect x="638" y="765" width="3" height="17" fill="#000"/><rect x="647" y="755" width="1" height="38" fill="#52c852"/><rect x="645" y="763" width="5" height="31" fill="#52c852"/><rect x="646" y="764" width="3" height="29" fill="#a8f0a0"/><rect x="655" y="784" width="1" height="17" fill="#52c852"/><rect x="653" y="789" width="5" height="5" fill="#52c852"/><rect x="654" y="790" width="3" height="3" fill="#000"/><rect x="663" y="753" width="1" height="42" fill="#52c852"/><rect x="661" y="777" width="5" height="12" fill="#52c852"/><rect x="662" y="778" width="3" height="10" fill="#000"/><rect x="671" y="758" width="1" height="42" fill="#52c852"/><rect x="669" y="766" width="5" height="13" fill="#52c852"/><rect x="670" y="767" width="3" height="11" fill="#000"/><rect x="679" y="752" width="1" height="57" fill="#52c852"/><rect x="677" y="766" width="5" height="33" fill="#52c852"/><rect x="678" y="767" width="3" height="31" fill="#a8f0a0"/><rect x="687" y="785" width="1" height="12" fill="#52c852"/><rect x="685" y="786" width="5" height="3" fill="#52c852"/><rect x="686" y="787" width="3" height="1" fill="#a8f0a0"/><rect x="695" y="779" width="1" height="91" fill="#52c852"/><rect x="693" y="786" width="5" height="51" fill="#52c852"/><rect x="694" y="787" width="3" height="49" fill="#a8f0a0"/><rect x="703" y="834" width="1" height="36" fill="#52c852"/><rect x="701" y="836" width="5" height="35" fill="#52c852"/><rect x="702" y="837" width="3" height="33" fill="#a8f0a0"/><rect x="711" y="850" width="1" height="20" fill="#52c852"/><rect x="709" y="870" width="5" height="2" fill="#52c852"/><rect x="719" y="853" width="1" height="17" fill="#52c852"/><rect x="717" y="856" width="5" height="15" fill="#52c852"/><rect x="718" y="857" width="3" height="13" fill="#000"/><rect x="727" y="853" width="1" height="17" fill="#52c852"/><rect x="725" y="856" width="5" height="15" fill="#52c852"/><rect x="726" y="857" width="3" height="13" fill="#a8f0a0"/><rect x="823" y="828" width="1" height="42" fill="#52c852"/><rect x="821" y="844" width="5" height="27" fill="#52c852"/><rect x="822" y="845" width="3" height="25" fill="#000"/><rect x="831" y="822" width="1" height="33" fill="#52c852"/><rect x="829" y="826" width="5" height="19" fill="#52c852"/><rect x="830" y="827" width="3" height="17" fill="#000"/><rect x="839" y="811" width="1" height="22" fill="#52c852"/><rect x="837" y="822" width="5" height="6" fill="#52c852"/><rect x="838" y="823" width="3" height="4" fill="#000"/><rect x="847" y="812" width="1" height="18" fill="#52c852"/><rect x="845" y="821" width="5" height="3" fill="#52c852"/><rect x="846" y="822" width="3" height="1" fill="#a8f0a0"/><rect x="855" y="812" width="1" height="23" fill="#52c852"/><rect x="853" y="821" width="5" height="15" fill="#52c852"/><rect x="854" y="822" width="3" height="13" fill="#a8f0a0"/><rect x="863" y="831" width="1" height="3" fill="#52c852"/><rect x="861" y="833" width="5" height="2" fill="#52c852"/></g></g></svg>
<svg style="position:absolute;left:259px;top:571px" width="813" height="290" viewBox="259 571 813 290" shape-rendering="crispEdges"><path d="M262.5 575 V900.5 H1026.5 V575.5 H262" stroke="#fff" fill="none" stroke-width="1"/><path d="M1026 582.5 H1030" stroke="#fff"/><path d="M1026 615.5 H1030" stroke="#fff"/><path d="M1026 648.5 H1030" stroke="#fff"/><path d="M1026 681.5 H1030" stroke="#fff"/><path d="M1026 714.5 H1030" stroke="#fff"/><path d="M1026 747.5 H1030" stroke="#fff"/><path d="M1026 780.5 H1030" stroke="#fff"/><path d="M1026 813.5 H1030" stroke="#fff"/><path d="M1026 846.5 H1030" stroke="#fff"/><path d="M866 576 H876 L871 582 Z" fill="#808080" shape-rendering="auto"/></svg>
<div class="t" style="left:1032px;top:578px;font-size:10px;color:#fff;letter-spacing:-0.3px">1894.35</div>
<div class="t" style="left:1032px;top:611px;font-size:10px;color:#fff;letter-spacing:-0.3px">1888.50</div>
<div class="t" style="left:1032px;top:644px;font-size:10px;color:#fff;letter-spacing:-0.3px">1882.80</div>
<div class="t" style="left:1032px;top:677px;font-size:10px;color:#fff;letter-spacing:-0.3px">1876.95</div>
<div class="t" style="left:1032px;top:710px;font-size:10px;color:#fff;letter-spacing:-0.3px">1871.25</div>
<div class="t" style="left:1032px;top:743px;font-size:10px;color:#fff;letter-spacing:-0.3px">1865.40</div>
<div class="t" style="left:1032px;top:776px;font-size:10px;color:#fff;letter-spacing:-0.3px">1859.70</div>
<div class="t" style="left:1032px;top:809px;font-size:10px;color:#fff;letter-spacing:-0.3px">1853.85</div>
<div class="t" style="left:1032px;top:842px;font-size:10px;color:#fff;letter-spacing:-0.3px">1848.15</div>
<div class="t" style="left:1028px;top:828px;font-size:10px;color:#000;"></div>
<div class="t" style="left:268px;top:579px;font-size:10px;color:#fff;letter-spacing:-0.25px">GOLD,H1&nbsp; 1850.20 1850.64 1850.14 1850.32</div>
<div style="position:absolute;left:1028px;top:827px;width:40px;height:12px;background:#fff"></div>
<div class="t" style="left:1032px;top:829px;font-size:10px;color:#000;letter-spacing:-0.3px">1850.32</div>
<div style="position:absolute;left:1082px;top:98px;width:832px;height:294px;background:#b4cce8;border-top:1px solid #4a4a4a;border-right:1px solid #3a3a3a;border-bottom:1px solid #3a3a3a;box-sizing:border-box;border-top-left-radius:6px;border-top-right-radius:6px"></div>
<div style="position:absolute;left:1083px;top:99px;width:830px;height:31px;background:linear-gradient(to bottom,#bcd3ec,#a9c7e8 40%,#b7d0ec);border-top-left-radius:6px;border-top-right-radius:6px"></div>
<div style="position:absolute;left:1093px;top:111px;width:15px;height:15px"><svg width="15" height="15" viewBox="0 0 15 15"><rect x="0.5" y="0.5" width="11" height="8" fill="#d8eefa" stroke="#5a8ab0"/><path d="M2 6 L4 3 L6 5 L8 2" stroke="#5a8ab0" fill="none"/><rect x="3.5" y="5.5" width="11" height="9" fill="#eaf7fd" stroke="#5a8ab0"/><path d="M5.5 8.5 L7.5 12 L9.5 9 L11.5 12" stroke="#5a8ab0" fill="none"/></svg></div>
<div class="t" style="left:1112px;top:112px;font-size:12px;color:#0d1a2a;letter-spacing:-0.5px">WTI,H1</div>
<div style="position:absolute;left:1805px;top:109px;width:31px;height:18px;background:linear-gradient(#dfe8f2,#c9d6e4);border:1px solid #8c9cb0;border-radius:3px;box-sizing:border-box"></div>
<div style="position:absolute;left:1839px;top:109px;width:31px;height:18px;background:linear-gradient(#dfe8f2,#c9d6e4);border:1px solid #8c9cb0;border-radius:3px;box-sizing:border-box"></div>
<div style="position:absolute;left:1873px;top:109px;width:31px;height:18px;background:linear-gradient(#f6a898,#f08a78 45%,#d84424 52%,#e2603e);border:1px solid #3a1a22;border-radius:3px;box-sizing:border-box"></div>
<div style="position:absolute;left:1815px;top:118px;width:10px;height:4px;border:1px solid #3a4a5a;background:#fff;box-sizing:border-box;border-radius:1px"></div>
<div style="position:absolute;left:1849px;top:113px;width:11px;height:9px;border:1px solid #3a4a5a;background:#fff;box-sizing:border-box;border-radius:1px"></div>
<div style="position:absolute;left:1852px;top:116px;width:5px;height:3px;border:1px solid #3a4a5a;box-sizing:border-box"></div>
<svg style="position:absolute;left:1882px;top:112px" width="13" height="11"><path d="M2 1.5 L11 9.5 M11 1.5 L2 9.5" stroke="#3a4a5a" stroke-width="3.2" stroke-linecap="round"/><path d="M2 1.5 L11 9.5 M11 1.5 L2 9.5" stroke="#fff" stroke-width="1.4" stroke-linecap="round"/></svg>
<svg style="position:absolute;left:1092px;top:131px" width="812" height="251" viewBox="1092 131 812 251" shape-rendering="crispEdges"><rect x="1092" y="131" width="812" height="251" fill="#000"/><path d="M1207.5 135 V361" stroke="#fff" stroke-dasharray="3 2" stroke-width="1"/><path d="M1391.5 135 V361" stroke="#fff" stroke-dasharray="3 2" stroke-width="1"/><path d="M1583.5 135 V361" stroke="#fff" stroke-dasharray="3 2" stroke-width="1"/><path d="M1767.5 135 V361" stroke="#fff" stroke-dasharray="3 2" stroke-width="1"/><path d="M1094 269.5 H1858" stroke="#a8a8a8" stroke-width="1"/></svg>
<svg style="position:absolute;left:1092px;top:131px" width="812" height="251" viewBox="1092 131 812 251">
<clipPath id="c1092131"><rect x="1095" y="135" width="763" height="226"/></clipPath><g clip-path="url(#c1092131)"><polyline points="1095.5,187.5 1103.5,167.5 1111.5,151.5 1119.5,153.5 1127.5,166.5 1135.5,174.5 1143.5,186.5 1151.5,157.5 1159.5,153.5 1167.5,157.5 1175.5,171.5 1183.5,159.5 1191.5,155.5 1199.5,155.5 1207.5,178.5 1215.5,177.5 1223.5,181.5 1231.5,173.5 1239.5,163.5 1247.5,165.5 1255.5,167.5 1263.5,175.5 1271.5,184.5 1279.5,181.5 1287.5,187.5 1295.5,199.5 1303.5,209.5 1311.5,216.5 1319.5,209.5 1327.5,218.5 1335.5,247.5 1343.5,257.5 1351.5,268.5 1359.5,276.5 1367.5,280.5 1375.5,287.5 1383.5,287.5 1391.5,283.5 1399.5,282.5 1407.5,287.5 1415.5,307.5 1423.5,305.5 1431.5,298.5 1439.5,295.5 1447.5,299.5 1455.5,285.5 1463.5,270.5 1471.5,266.5 1479.5,303.5 1487.5,303.5 1495.5,293.5 1503.5,273.5 1511.5,275.5 1519.5,288.5 1527.5,292.5 1535.5,325.5 1543.5,335.5 1551.5,314.5 1559.5,327.5 1567.5,333.5 1575.5,336.5 1583.5,338.5 1591.5,345.5 1599.5,345.5 1607.5,309.5 1615.5,300.5 1623.5,302.5 1631.5,301.5 1639.5,295.5 1647.5,295.5 1655.5,294.5 1663.5,275.5 1671.5,278.5 1679.5,275.5 1687.5,267.5 1695.5,269.5" fill="none" stroke="#8fdc8f" stroke-width="1"/></g></svg>
<svg style="position:absolute;left:1092px;top:131px" width="812" height="251" viewBox="1092 131 812 251" shape-rendering="crispEdges"><path d="M1094.5 134 V361.5 H1858.5 V134.5 H1094" stroke="#fff" fill="none" stroke-width="1"/><path d="M1858 160.5 H1862" stroke="#fff"/><path d="M1858 193.5 H1862" stroke="#fff"/><path d="M1858 226.5 H1862" stroke="#fff"/><path d="M1858 259.5 H1862" stroke="#fff"/><path d="M1858 292.5 H1862" stroke="#fff"/><path d="M1858 325.5 H1862" stroke="#fff"/><path d="M1858 358.5 H1862" stroke="#fff"/><path d="M1094.5 361 V366" stroke="#fff"/><path d="M1158.5 361 V366" stroke="#fff"/><path d="M1222.5 361 V366" stroke="#fff"/><path d="M1286.5 361 V366" stroke="#fff"/><path d="M1350.5 361 V366" stroke="#fff"/><path d="M1414.5 361 V366" stroke="#fff"/><path d="M1478.5 361 V366" stroke="#fff"/><path d="M1542.5 361 V366" stroke="#fff"/><path d="M1606.5 361 V366" stroke="#fff"/><path d="M1670.5 361 V366" stroke="#fff"/><path d="M1698 135 H1708 L1703 141 Z" fill="#808080" shape-rendering="auto"/></svg>
<div class="t" style="left:1864px;top:156px;font-size:10px;color:#fff;letter-spacing:-0.3px">109.160</div>
<div class="t" style="left:1864px;top:189px;font-size:10px;color:#fff;letter-spacing:-0.3px">107.120</div>
<div class="t" style="left:1864px;top:222px;font-size:10px;color:#fff;letter-spacing:-0.3px">105.080</div>
<div class="t" style="left:1864px;top:255px;font-size:10px;color:#fff;letter-spacing:-0.3px">103.040</div>
<div class="t" style="left:1864px;top:288px;font-size:10px;color:#fff;letter-spacing:-0.3px">101.000</div>
<div class="t" style="left:1864px;top:321px;font-size:10px;color:#fff;letter-spacing:-0.3px">98.960</div>
<div class="t" style="left:1864px;top:354px;font-size:10px;color:#fff;letter-spacing:-0.3px">96.980</div>
<div class="t" style="left:1860px;top:264px;font-size:10px;color:#000;"></div>
<div class="t" style="left:1095px;top:366px;font-size:10px;color:#fff;letter-spacing:-0.3px">6 May 2022</div>
<div class="t" style="left:1159px;top:366px;font-size:10px;color:#fff;letter-spacing:-0.3px">6 May 17:00</div>
<div class="t" style="left:1223px;top:366px;font-size:10px;color:#fff;letter-spacing:-0.3px">9 May 02:00</div>
<div class="t" style="left:1287px;top:366px;font-size:10px;color:#fff;letter-spacing:-0.3px">9 May 10:00</div>
<div class="t" style="left:1351px;top:366px;font-size:10px;color:#fff;letter-spacing:-0.3px">9 May 18:00</div>
<div class="t" style="left:1415px;top:366px;font-size:10px;color:#fff;letter-spacing:-0.3px">10 May 03:00</div>
<div class="t" style="left:1479px;top:366px;font-size:10px;color:#fff;letter-spacing:-0.3px">10 May 11:00</div>
<div class="t" style="left:1543px;top:366px;font-size:10px;color:#fff;letter-spacing:-0.3px">10 May 19:00</div>
<div class="t" style="left:1607px;top:366px;font-size:10px;color:#fff;letter-spacing:-0.3px">11 May 04:00</div>
<div class="t" style="left:1671px;top:366px;font-size:10px;color:#fff;letter-spacing:-0.3px">11 May 12:00</div>
<div class="t" style="left:1100px;top:138px;font-size:10px;color:#fff;letter-spacing:-0.25px">WTI,H1&nbsp; 102.527 102.531 102.376 102.441</div>
<div style="position:absolute;left:1860px;top:263px;width:40px;height:12px;background:#fff"></div>
<div class="t" style="left:1864px;top:265px;font-size:10px;color:#000;letter-spacing:-0.3px">102.441</div>
<div style="position:absolute;left:1082px;top:392px;width:832px;height:467px;background:#d0dbe7;border-top:1px solid #4a4a4a;border-right:1px solid #3a3a3a;border-bottom:1px solid #3a3a3a;box-sizing:border-box;border-top-left-radius:6px;border-top-right-radius:6px"></div>
<div style="position:absolute;left:1083px;top:393px;width:830px;height:31px;background:linear-gradient(to bottom,#d2dde9,#c6d5e6 40%,#d8e2ed);border-top-left-radius:6px;border-top-right-radius:6px"></div>
<div style="position:absolute;left:1093px;top:405px;width:15px;height:15px"><svg width="15" height="15" viewBox="0 0 15 15"><rect x="0.5" y="0.5" width="11" height="8" fill="#d8eefa" stroke="#5a8ab0"/><path d="M2 6 L4 3 L6 5 L8 2" stroke="#5a8ab0" fill="none"/><rect x="3.5" y="5.5" width="11" height="9" fill="#eaf7fd" stroke="#5a8ab0"/><path d="M5.5 8.5 L7.5 12 L9.5 9 L11.5 12" stroke="#5a8ab0" fill="none"/></svg></div>
<div class="t" style="left:1112px;top:406px;font-size:12px;color:#8da0b4;letter-spacing:-0.5px">BITCOIN,H1</div>
<div style="position:absolute;left:1805px;top:403px;width:31px;height:18px;background:linear-gradient(#dfe8f2,#c9d6e4);border:1px solid #8c9cb0;border-radius:3px;box-sizing:border-box"></div>
<div style="position:absolute;left:1839px;top:403px;width:31px;height:18px;background:linear-gradient(#dfe8f2,#c9d6e4);border:1px solid #8c9cb0;border-radius:3px;box-sizing:border-box"></div>
<div style="position:absolute;left:1873px;top:403px;width:31px;height:18px;background:linear-gradient(#dfe8f2,#c9d6e4);border:1px solid #8c9cb0;border-radius:3px;box-sizing:border-box"></div>
<div style="position:absolute;left:1815px;top:412px;width:10px;height:4px;border:1px solid #3a4a5a;background:#fff;box-sizing:border-box;border-radius:1px"></div>
<div style="position:absolute;left:1849px;top:407px;width:11px;height:9px;border:1px solid #3a4a5a;background:#fff;box-sizing:border-box;border-radius:1px"></div>
<div style="position:absolute;left:1852px;top:410px;width:5px;height:3px;border:1px solid #3a4a5a;box-sizing:border-box"></div>
<svg style="position:absolute;left:1882px;top:406px" width="13" height="11"><path d="M2 1.5 L11 9.5 M11 1.5 L2 9.5" stroke="#3a4a5a" stroke-width="3.2" stroke-linecap="round"/><path d="M2 1.5 L11 9.5 M11 1.5 L2 9.5" stroke="#fff" stroke-width="1.4" stroke-linecap="round"/></svg>
<svg style="position:absolute;left:1092px;top:424px" width="812" height="424" viewBox="1092 424 812 424" shape-rendering="crispEdges"><rect x="1092" y="424" width="812" height="424" fill="#000"/><path d="M1191.5 428 V827" stroke="#fff" stroke-dasharray="3 2" stroke-width="1"/><path d="M1383.5 428 V827" stroke="#fff" stroke-dasharray="3 2" stroke-width="1"/><path d="M1575.5 428 V827" stroke="#fff" stroke-dasharray="3 2" stroke-width="1"/><path d="M1767.5 428 V827" stroke="#fff" stroke-dasharray="3 2" stroke-width="1"/><path d="M1094 692.5 H1853" stroke="#a8a8a8" stroke-width="1"/></svg>
<svg style="position:absolute;left:1092px;top:424px" width="812" height="424" viewBox="1092 424 812 424">
<clipPath id="c1092424"><rect x="1095" y="428" width="758" height="399"/></clipPath><g clip-path="url(#c1092424)"><g shape-rendering="crispEdges"><rect x="1095" y="452" width="1" height="19" fill="#52c852"/><rect x="1093" y="457" width="5" height="13" fill="#52c852"/><rect x="1094" y="458" width="3" height="11" fill="#000"/><rect x="1103" y="447" width="1" height="11" fill="#52c852"/><rect x="1101" y="452" width="5" height="7" fill="#52c852"/><rect x="1102" y="453" width="3" height="5" fill="#000"/><rect x="1111" y="449" width="1" height="18" fill="#52c852"/><rect x="1109" y="452" width="5" height="14" fill="#52c852"/><rect x="1110" y="453" width="3" height="12" fill="#a8f0a0"/><rect x="1119" y="461" width="1" height="23" fill="#52c852"/><rect x="1117" y="464" width="5" height="21" fill="#52c852"/><rect x="1118" y="465" width="3" height="19" fill="#a8f0a0"/><rect x="1127" y="468" width="1" height="19" fill="#52c852"/><rect x="1125" y="477" width="5" height="8" fill="#52c852"/><rect x="1126" y="478" width="3" height="6" fill="#000"/><rect x="1135" y="467" width="1" height="18" fill="#52c852"/><rect x="1133" y="477" width="5" height="9" fill="#52c852"/><rect x="1134" y="478" width="3" height="7" fill="#a8f0a0"/><rect x="1143" y="470" width="1" height="17" fill="#52c852"/><rect x="1141" y="482" width="5" height="4" fill="#52c852"/><rect x="1142" y="483" width="3" height="2" fill="#000"/><rect x="1151" y="482" width="1" height="48" fill="#52c852"/><rect x="1149" y="482" width="5" height="25" fill="#52c852"/><rect x="1150" y="483" width="3" height="23" fill="#a8f0a0"/><rect x="1159" y="465" width="1" height="55" fill="#52c852"/><rect x="1157" y="473" width="5" height="34" fill="#52c852"/><rect x="1158" y="474" width="3" height="32" fill="#000"/><rect x="1167" y="458" width="1" height="16" fill="#52c852"/><rect x="1165" y="467" width="5" height="8" fill="#52c852"/><rect x="1166" y="468" width="3" height="6" fill="#000"/><rect x="1175" y="465" width="1" height="29" fill="#52c852"/><rect x="1173" y="467" width="5" height="28" fill="#52c852"/><rect x="1174" y="468" width="3" height="26" fill="#a8f0a0"/><rect x="1183" y="476" width="1" height="18" fill="#52c852"/><rect x="1181" y="477" width="5" height="18" fill="#52c852"/><rect x="1182" y="478" width="3" height="16" fill="#000"/><rect x="1191" y="476" width="1" height="31" fill="#52c852"/><rect x="1189" y="477" width="5" height="15" fill="#52c852"/><rect x="1190" y="478" width="3" height="13" fill="#a8f0a0"/><rect x="1199" y="489" width="1" height="27" fill="#52c852"/><rect x="1197" y="490" width="5" height="18" fill="#52c852"/><rect x="1198" y="491" width="3" height="16" fill="#a8f0a0"/><rect x="1207" y="494" width="1" height="18" fill="#52c852"/><rect x="1205" y="500" width="5" height="9" fill="#52c852"/><rect x="1206" y="501" width="3" height="7" fill="#000"/><rect x="1215" y="494" width="1" height="14" fill="#52c852"/><rect x="1213" y="500" width="5" height="8" fill="#52c852"/><rect x="1214" y="501" width="3" height="6" fill="#a8f0a0"/><rect x="1223" y="505" width="1" height="56" fill="#52c852"/><rect x="1221" y="506" width="5" height="42" fill="#52c852"/><rect x="1222" y="507" width="3" height="40" fill="#a8f0a0"/><rect x="1231" y="524" width="1" height="30" fill="#52c852"/><rect x="1229" y="542" width="5" height="6" fill="#52c852"/><rect x="1230" y="543" width="3" height="4" fill="#000"/><rect x="1239" y="522" width="1" height="24" fill="#52c852"/><rect x="1237" y="536" width="5" height="8" fill="#52c852"/><rect x="1238" y="537" width="3" height="6" fill="#000"/><rect x="1247" y="530" width="1" height="18" fill="#52c852"/><rect x="1245" y="536" width="5" height="11" fill="#52c852"/><rect x="1246" y="537" width="3" height="9" fill="#a8f0a0"/><rect x="1255" y="541" width="1" height="17" fill="#52c852"/><rect x="1253" y="541" width="5" height="6" fill="#52c852"/><rect x="1254" y="542" width="3" height="4" fill="#000"/><rect x="1263" y="528" width="1" height="17" fill="#52c852"/><rect x="1261" y="541" width="5" height="5" fill="#52c852"/><rect x="1262" y="542" width="3" height="3" fill="#a8f0a0"/><rect x="1271" y="528" width="1" height="43" fill="#52c852"/><rect x="1269" y="534" width="5" height="12" fill="#52c852"/><rect x="1270" y="535" width="3" height="10" fill="#000"/><rect x="1279" y="527" width="1" height="26" fill="#52c852"/><rect x="1277" y="534" width="5" height="14" fill="#52c852"/><rect x="1278" y="535" width="3" height="12" fill="#a8f0a0"/><rect x="1287" y="545" width="1" height="63" fill="#52c852"/><rect x="1285" y="546" width="5" height="52" fill="#52c852"/><rect x="1286" y="547" width="3" height="50" fill="#a8f0a0"/><rect x="1295" y="572" width="1" height="36" fill="#52c852"/><rect x="1293" y="576" width="5" height="21" fill="#52c852"/><rect x="1294" y="577" width="3" height="19" fill="#000"/><rect x="1303" y="574" width="1" height="22" fill="#52c852"/><rect x="1301" y="575" width="5" height="20" fill="#52c852"/><rect x="1302" y="576" width="3" height="18" fill="#a8f0a0"/><rect x="1311" y="554" width="1" height="49" fill="#52c852"/><rect x="1309" y="581" width="5" height="14" fill="#52c852"/><rect x="1310" y="582" width="3" height="12" fill="#000"/><rect x="1319" y="579" width="1" height="43" fill="#52c852"/><rect x="1317" y="580" width="5" height="43" fill="#52c852"/><rect x="1318" y="581" width="3" height="41" fill="#a8f0a0"/><rect x="1327" y="607" width="1" height="44" fill="#52c852"/><rect x="1325" y="622" width="5" height="10" fill="#52c852"/><rect x="1326" y="623" width="3" height="8" fill="#a8f0a0"/><rect x="1335" y="614" width="1" height="69" fill="#52c852"/><rect x="1333" y="630" width="5" height="48" fill="#52c852"/><rect x="1334" y="631" width="3" height="46" fill="#a8f0a0"/><rect x="1343" y="662" width="1" height="65" fill="#52c852"/><rect x="1341" y="677" width="5" height="32" fill="#52c852"/><rect x="1342" y="678" width="3" height="30" fill="#a8f0a0"/><rect x="1351" y="696" width="1" height="80" fill="#52c852"/><rect x="1349" y="707" width="5" height="39" fill="#52c852"/><rect x="1350" y="708" width="3" height="37" fill="#a8f0a0"/><rect x="1359" y="724" width="1" height="48" fill="#52c852"/><rect x="1357" y="730" width="5" height="16" fill="#52c852"/><rect x="1358" y="731" width="3" height="14" fill="#000"/><rect x="1367" y="664" width="1" height="89" fill="#52c852"/><rect x="1365" y="730" width="5" height="4" fill="#52c852"/><rect x="1366" y="731" width="3" height="2" fill="#a8f0a0"/><rect x="1375" y="691" width="1" height="52" fill="#52c852"/><rect x="1373" y="732" width="5" height="10" fill="#52c852"/><rect x="1374" y="733" width="3" height="8" fill="#a8f0a0"/><rect x="1383" y="703" width="1" height="50" fill="#52c852"/><rect x="1381" y="720" width="5" height="22" fill="#52c852"/><rect x="1382" y="721" width="3" height="20" fill="#000"/><rect x="1391" y="712" width="1" height="85" fill="#52c852"/><rect x="1389" y="720" width="5" height="75" fill="#52c852"/><rect x="1390" y="721" width="3" height="73" fill="#a8f0a0"/><rect x="1399" y="736" width="1" height="81" fill="#52c852"/><rect x="1397" y="745" width="5" height="51" fill="#52c852"/><rect x="1398" y="746" width="3" height="49" fill="#000"/><rect x="1407" y="697" width="1" height="55" fill="#52c852"/><rect x="1405" y="736" width="5" height="11" fill="#52c852"/><rect x="1406" y="737" width="3" height="9" fill="#000"/><rect x="1415" y="701" width="1" height="42" fill="#52c852"/><rect x="1413" y="726" width="5" height="11" fill="#52c852"/><rect x="1414" y="727" width="3" height="9" fill="#000"/><rect x="1423" y="715" width="1" height="39" fill="#52c852"/><rect x="1421" y="726" width="5" height="29" fill="#52c852"/><rect x="1422" y="727" width="3" height="27" fill="#a8f0a0"/><rect x="1431" y="705" width="1" height="52" fill="#52c852"/><rect x="1429" y="711" width="5" height="44" fill="#52c852"/><rect x="1430" y="712" width="3" height="42" fill="#000"/><rect x="1439" y="657" width="1" height="55" fill="#52c852"/><rect x="1437" y="668" width="5" height="45" fill="#52c852"/><rect x="1438" y="669" width="3" height="43" fill="#000"/><rect x="1447" y="609" width="1" height="59" fill="#52c852"/><rect x="1445" y="648" width="5" height="21" fill="#52c852"/><rect x="1446" y="649" width="3" height="19" fill="#000"/><rect x="1455" y="641" width="1" height="42" fill="#52c852"/><rect x="1453" y="648" width="5" height="36" fill="#52c852"/><rect x="1454" y="649" width="3" height="34" fill="#a8f0a0"/><rect x="1463" y="655" width="1" height="33" fill="#52c852"/><rect x="1461" y="673" width="5" height="11" fill="#52c852"/><rect x="1462" y="674" width="3" height="9" fill="#000"/><rect x="1471" y="661" width="1" height="44" fill="#52c852"/><rect x="1469" y="673" width="5" height="28" fill="#52c852"/><rect x="1470" y="674" width="3" height="26" fill="#a8f0a0"/><rect x="1479" y="687" width="1" height="23" fill="#52c852"/><rect x="1477" y="700" width="5" height="7" fill="#52c852"/><rect x="1478" y="701" width="3" height="5" fill="#a8f0a0"/><rect x="1487" y="669" width="1" height="39" fill="#52c852"/><rect x="1485" y="683" width="5" height="24" fill="#52c852"/><rect x="1486" y="684" width="3" height="22" fill="#000"/><rect x="1495" y="635" width="1" height="55" fill="#52c852"/><rect x="1493" y="644" width="5" height="40" fill="#52c852"/><rect x="1494" y="645" width="3" height="38" fill="#000"/><rect x="1503" y="628" width="1" height="61" fill="#52c852"/><rect x="1501" y="644" width="5" height="28" fill="#52c852"/><rect x="1502" y="645" width="3" height="26" fill="#a8f0a0"/><rect x="1511" y="641" width="1" height="37" fill="#52c852"/><rect x="1509" y="644" width="5" height="26" fill="#52c852"/><rect x="1510" y="645" width="3" height="24" fill="#a8f0a0"/><rect x="1519" y="665" width="1" height="72" fill="#52c852"/><rect x="1517" y="668" width="5" height="56" fill="#52c852"/><rect x="1518" y="669" width="3" height="54" fill="#a8f0a0"/><rect x="1527" y="691" width="1" height="46" fill="#52c852"/><rect x="1525" y="706" width="5" height="18" fill="#52c852"/><rect x="1526" y="707" width="3" height="16" fill="#000"/><rect x="1535" y="697" width="1" height="34" fill="#52c852"/><rect x="1533" y="706" width="5" height="7" fill="#52c852"/><rect x="1534" y="707" width="3" height="5" fill="#a8f0a0"/><rect x="1543" y="670" width="1" height="44" fill="#52c852"/><rect x="1541" y="679" width="5" height="35" fill="#52c852"/><rect x="1542" y="680" width="3" height="33" fill="#000"/><rect x="1551" y="672" width="1" height="26" fill="#52c852"/><rect x="1549" y="679" width="5" height="5" fill="#52c852"/><rect x="1550" y="680" width="3" height="3" fill="#a8f0a0"/><rect x="1559" y="677" width="1" height="36" fill="#52c852"/><rect x="1557" y="683" width="5" height="22" fill="#52c852"/><rect x="1558" y="684" width="3" height="20" fill="#a8f0a0"/><rect x="1567" y="703" width="1" height="31" fill="#52c852"/><rect x="1565" y="703" width="5" height="27" fill="#52c852"/><rect x="1566" y="704" width="3" height="25" fill="#a8f0a0"/><rect x="1575" y="716" width="1" height="67" fill="#52c852"/><rect x="1573" y="728" width="5" height="56" fill="#52c852"/><rect x="1574" y="729" width="3" height="54" fill="#a8f0a0"/><rect x="1583" y="733" width="1" height="56" fill="#52c852"/><rect x="1581" y="744" width="5" height="40" fill="#52c852"/><rect x="1582" y="745" width="3" height="38" fill="#000"/><rect x="1591" y="711" width="1" height="39" fill="#52c852"/><rect x="1589" y="726" width="5" height="20" fill="#52c852"/><rect x="1590" y="727" width="3" height="18" fill="#000"/><rect x="1599" y="704" width="1" height="38" fill="#52c852"/><rect x="1597" y="725" width="5" height="4" fill="#52c852"/><rect x="1598" y="726" width="3" height="2" fill="#000"/><rect x="1607" y="723" width="1" height="27" fill="#52c852"/><rect x="1605" y="725" width="5" height="21" fill="#52c852"/><rect x="1606" y="726" width="3" height="19" fill="#a8f0a0"/><rect x="1615" y="690" width="1" height="66" fill="#52c852"/><rect x="1613" y="694" width="5" height="52" fill="#52c852"/><rect x="1614" y="695" width="3" height="50" fill="#000"/><rect x="1623" y="680" width="1" height="37" fill="#52c852"/><rect x="1621" y="694" width="5" height="20" fill="#52c852"/><rect x="1622" y="695" width="3" height="18" fill="#a8f0a0"/><rect x="1631" y="700" width="1" height="24" fill="#52c852"/><rect x="1629" y="712" width="5" height="3" fill="#52c852"/><rect x="1630" y="713" width="3" height="1" fill="#a8f0a0"/><rect x="1639" y="664" width="1" height="59" fill="#52c852"/><rect x="1637" y="696" width="5" height="18" fill="#52c852"/><rect x="1638" y="697" width="3" height="16" fill="#000"/><rect x="1647" y="691" width="1" height="84" fill="#52c852"/><rect x="1645" y="696" width="5" height="71" fill="#52c852"/><rect x="1646" y="697" width="3" height="69" fill="#a8f0a0"/><rect x="1655" y="743" width="1" height="43" fill="#52c852"/><rect x="1653" y="758" width="5" height="9" fill="#52c852"/><rect x="1654" y="759" width="3" height="7" fill="#000"/><rect x="1663" y="699" width="1" height="74" fill="#52c852"/><rect x="1661" y="699" width="5" height="61" fill="#52c852"/><rect x="1662" y="700" width="3" height="59" fill="#000"/><rect x="1671" y="672" width="1" height="50" fill="#52c852"/><rect x="1669" y="675" width="5" height="25" fill="#52c852"/><rect x="1670" y="676" width="3" height="23" fill="#000"/><rect x="1679" y="645" width="1" height="41" fill="#52c852"/><rect x="1677" y="666" width="5" height="11" fill="#52c852"/><rect x="1678" y="667" width="3" height="9" fill="#000"/><rect x="1687" y="662" width="1" height="31" fill="#52c852"/><rect x="1685" y="666" width="5" height="26" fill="#52c852"/><rect x="1686" y="667" width="3" height="24" fill="#a8f0a0"/><rect x="1695" y="690" width="1" height="4" fill="#52c852"/><rect x="1693" y="690" width="5" height="5" fill="#52c852"/><rect x="1694" y="691" width="3" height="3" fill="#a8f0a0"/></g></g></svg>
<svg style="position:absolute;left:1092px;top:424px" width="812" height="424" viewBox="1092 424 812 424" shape-rendering="crispEdges"><path d="M1094.5 427 V827.5 H1853.5 V427.5 H1094" stroke="#fff" fill="none" stroke-width="1"/><path d="M1853 461.5 H1857" stroke="#fff"/><path d="M1853 494.5 H1857" stroke="#fff"/><path d="M1853 527.5 H1857" stroke="#fff"/><path d="M1853 560.5 H1857" stroke="#fff"/><path d="M1853 593.5 H1857" stroke="#fff"/><path d="M1853 626.5 H1857" stroke="#fff"/><path d="M1853 659.5 H1857" stroke="#fff"/><path d="M1853 725.5 H1857" stroke="#fff"/><path d="M1853 758.5 H1857" stroke="#fff"/><path d="M1853 791.5 H1857" stroke="#fff"/><path d="M1853 824.5 H1857" stroke="#fff"/><path d="M1094.5 827 V832" stroke="#fff"/><path d="M1158.5 827 V832" stroke="#fff"/><path d="M1222.5 827 V832" stroke="#fff"/><path d="M1286.5 827 V832" stroke="#fff"/><path d="M1350.5 827 V832" stroke="#fff"/><path d="M1414.5 827 V832" stroke="#fff"/><path d="M1478.5 827 V832" stroke="#fff"/><path d="M1542.5 827 V832" stroke="#fff"/><path d="M1606.5 827 V832" stroke="#fff"/><path d="M1670.5 827 V832" stroke="#fff"/><path d="M1694 428 H1704 L1699 434 Z" fill="#808080" shape-rendering="auto"/></svg>
<div class="t" style="left:1859px;top:457px;font-size:10px;color:#fff;letter-spacing:-0.3px">34632.10</div>
<div class="t" style="left:1859px;top:490px;font-size:10px;color:#fff;letter-spacing:-0.3px">34181.65</div>
<div class="t" style="left:1859px;top:523px;font-size:10px;color:#fff;letter-spacing:-0.3px">33717.55</div>
<div class="t" style="left:1859px;top:556px;font-size:10px;color:#fff;letter-spacing:-0.3px">33267.10</div>
<div class="t" style="left:1859px;top:589px;font-size:10px;color:#fff;letter-spacing:-0.3px">32816.65</div>
<div class="t" style="left:1859px;top:622px;font-size:10px;color:#fff;letter-spacing:-0.3px">32366.20</div>
<div class="t" style="left:1859px;top:655px;font-size:10px;color:#fff;letter-spacing:-0.3px">31915.75</div>
<div class="t" style="left:1859px;top:721px;font-size:10px;color:#fff;letter-spacing:-0.3px">31001.20</div>
<div class="t" style="left:1859px;top:754px;font-size:10px;color:#fff;letter-spacing:-0.3px">30550.75</div>
<div class="t" style="left:1859px;top:787px;font-size:10px;color:#fff;letter-spacing:-0.3px">30100.30</div>
<div class="t" style="left:1859px;top:820px;font-size:10px;color:#fff;letter-spacing:-0.3px">29649.85</div>
<div class="t" style="left:1855px;top:687px;font-size:10px;color:#000;"></div>
<div class="t" style="left:1095px;top:832px;font-size:10px;color:#fff;letter-spacing:-0.3px">8 May 2022</div>
<div class="t" style="left:1159px;top:832px;font-size:10px;color:#fff;letter-spacing:-0.3px">8 May 20:00</div>
<div class="t" style="left:1223px;top:832px;font-size:10px;color:#fff;letter-spacing:-0.3px">9 May 04:00</div>
<div class="t" style="left:1287px;top:832px;font-size:10px;color:#fff;letter-spacing:-0.3px">9 May 12:00</div>
<div class="t" style="left:1351px;top:832px;font-size:10px;color:#fff;letter-spacing:-0.3px">9 May 20:00</div>
<div class="t" style="left:1415px;top:832px;font-size:10px;color:#fff;letter-spacing:-0.3px">10 May 04:00</div>
<div class="t" style="left:1479px;top:832px;font-size:10px;color:#fff;letter-spacing:-0.3px">10 May 12:00</div>
<div class="t" style="left:1543px;top:832px;font-size:10px;color:#fff;letter-spacing:-0.3px">10 May 20:00</div>
<div class="t" style="left:1607px;top:832px;font-size:10px;color:#fff;letter-spacing:-0.3px">11 May 04:00</div>
<div class="t" style="left:1671px;top:832px;font-size:10px;color:#fff;letter-spacing:-0.3px">11 May 12:00</div>
<div class="t" style="left:1100px;top:431px;font-size:10px;color:#fff;letter-spacing:-0.25px">BITCOIN,H1&nbsp; 31478.35 31484.21 31425.89 31444.63</div>
<div style="position:absolute;left:1855px;top:686px;width:46px;height:12px;background:#fff"></div>
<div class="t" style="left:1859px;top:688px;font-size:10px;color:#000;letter-spacing:-0.3px">31444.63</div>
<div style="position:absolute;left:248px;top:859px;width:1668px;height:26px;background:#f0f0f0"></div>
<div style="position:absolute;left:248px;top:860px;width:1668px;height:1px;background:#1a1a1a"></div>
<div class="t" style="left:265px;top:865px;font-size:12px;color:#8a8a8a;letter-spacing:-0.6px">EURUSD,H1</div>
<div style="position:absolute;left:338px;top:865px;width:1px;height:14px;background:#777"></div>
<div class="t" style="left:349px;top:865px;font-size:12px;color:#8a8a8a;letter-spacing:-0.6px">GOLD,H1</div>
<div style="position:absolute;left:410px;top:860px;width:60px;height:20px;background:#fff;border:1px solid #000;border-top:none;box-sizing:border-box"></div>
<div class="t" style="left:420px;top:865px;font-size:12px;color:#000;letter-spacing:-0.6px">WTI,H1</div>
<div class="t" style="left:481px;top:865px;font-size:12px;color:#8a8a8a;letter-spacing:-0.6px">BITCOIN,H1</div>
<div style="position:absolute;left:553px;top:865px;width:1px;height:14px;background:#777"></div>
<svg style="position:absolute;left:1884px;top:866px" width="30" height="10"><path d="M5 1 L1 5 L5 9Z" fill="#b0b0b0"/><path d="M24 1 L28 5 L24 9Z" fill="#b0b0b0"/></svg>
<div style="position:absolute;left:248px;top:884px;width:1668px;height:1px;background:#b4b4b4"></div>
<div style="position:absolute;left:0px;top:885px;width:1916px;height:128px;background:#f0f0f0"></div>
<div style="position:absolute;left:0px;top:885px;width:13px;height:128px;background:linear-gradient(to bottom,#dde7f2,#c3d5ea)"></div>
<svg style="position:absolute;left:1px;top:889px" width="8" height="8"><path d="M1 1 L7 7 M7 1 L1 7" stroke="#000" stroke-width="1.8"/></svg>
<div class="t" style="left:-19px;top:985px;font-size:11px;color:#000;transform:rotate(-90deg);transform-origin:center;width:50px;text-align:center">Terminal</div>
<div style="position:absolute;left:13px;top:885px;width:1903px;height:106px;background:#fff;border-left:1px solid #a0a0a0;box-sizing:border-box"></div>
<div style="position:absolute;left:14px;top:930px;width:1883px;height:20px;background:#ececec"></div>
<div style="position:absolute;left:14px;top:970px;width:1883px;height:20px;background:#ececec"></div>
<div style="position:absolute;left:14px;top:909px;width:1883px;height:1px;background:#dadada"></div>
<div style="position:absolute;left:14px;top:929px;width:1883px;height:1px;background:#dadada"></div>
<div style="position:absolute;left:14px;top:949px;width:1883px;height:1px;background:#dadada"></div>
<div style="position:absolute;left:14px;top:969px;width:1883px;height:1px;background:#dadada"></div>
<div style="position:absolute;left:14px;top:989px;width:1883px;height:1px;background:#dadada"></div>
<div style="position:absolute;left:354px;top:888px;width:1px;height:102px;background:#e2e2e2"></div>
<div style="position:absolute;left:1715px;top:888px;width:1px;height:102px;background:#e2e2e2"></div>
<div style="position:absolute;left:1815px;top:888px;width:1px;height:102px;background:#e2e2e2"></div>
<div class="t" style="left:19px;top:892px;font-size:12px;color:#000;">Name</div>
<div class="t" style="left:361px;top:892px;font-size:12px;color:#000;">Description</div>
<div class="t" style="left:1721px;top:892px;font-size:12px;color:#000;">Rating</div>
<div class="t" style="left:1846px;top:892px;font-size:12px;color:#000;">Date</div>
<svg style="position:absolute;left:1879px;top:893px" width="9" height="8"><path d="M1 1 H8 L4.5 7Z" fill="none" stroke="#666"/></svg>
<div style="position:absolute;left:16px;top:913px;width:13px;height:13px"><svg width="13" height="13" viewBox="0 0 13 13"><circle cx="6.5" cy="4" r="2.8" fill="#d8e6f0" stroke="#4a6e88"/><path d="M3 2 H10 L9 0.5 H4Z" fill="#4a6e88"/><path d="M1 12.5 Q1 7.5 6.5 7.5 Q12 7.5 12 12.5Z" fill="#4a7fa8" stroke="#2e5878"/><path d="M5 8 L6.5 11 L8 8" fill="#fff"/></svg></div>
<div class="t" style="left:34px;top:914px;font-size:12px;color:#000;letter-spacing:-0.17px">Three White Soldiers and Three Black Crows for Chart Sym...</div>
<div class="t" style="left:358px;top:914px;font-size:12px;color:#000;letter-spacing:-0.17px">Three White Soldiers and Three Black Crows for Chart Symbol and Period</div>
<div style="position:absolute;left:1719px;top:913px"><svg width="84" height="12" viewBox="0 0 84 12"><g transform="translate(0,0)"><path d="M6 0.8 L7.5 4.4 L11.4 4.6 L8.4 7.1 L9.4 10.9 L6 8.8 L2.6 10.9 L3.6 7.1 L0.6 4.6 L4.5 4.4Z" fill="#eee070" stroke="#a08a20" stroke-width="0.8"/></g><g transform="translate(18,0)"><path d="M6 0.8 L7.5 4.4 L11.4 4.6 L8.4 7.1 L9.4 10.9 L6 8.8 L2.6 10.9 L3.6 7.1 L0.6 4.6 L4.5 4.4Z" fill="#eee070" stroke="#a08a20" stroke-width="0.8"/></g><g transform="translate(36,0)"><path d="M6 0.8 L7.5 4.4 L11.4 4.6 L8.4 7.1 L9.4 10.9 L6 8.8 L2.6 10.9 L3.6 7.1 L0.6 4.6 L4.5 4.4Z" fill="#eee070" stroke="#a08a20" stroke-width="0.8"/></g><g transform="translate(54,0)"><path d="M6 0.8 L7.5 4.4 L11.4 4.6 L8.4 7.1 L9.4 10.9 L6 8.8 L2.6 10.9 L3.6 7.1 L0.6 4.6 L4.5 4.4Z" fill="#eee070" stroke="#a08a20" stroke-width="0.8"/></g><g transform="translate(72,0)"><path d="M6 0.8 L7.5 4.4 L11.4 4.6 L8.4 7.1 L9.4 10.9 L6 8.8 L2.6 10.9 L3.6 7.1 L0.6 4.6 L4.5 4.4Z" fill="#fbf6d0" stroke="#a08a20" stroke-width="0.8"/></g></svg></div>
<div class="t" style="left:1815px;top:914px;font-size:12px;color:#000;width:77px;text-align:right;letter-spacing:-0.3px">2024.04.10</div>
<div style="position:absolute;left:16px;top:933px;width:13px;height:13px"><svg width="13" height="13" viewBox="0 0 13 13"><circle cx="6.5" cy="4" r="2.8" fill="#d8e6f0" stroke="#4a6e88"/><path d="M3 2 H10 L9 0.5 H4Z" fill="#4a6e88"/><path d="M1 12.5 Q1 7.5 6.5 7.5 Q12 7.5 12 12.5Z" fill="#4a7fa8" stroke="#2e5878"/><path d="M5 8 L6.5 11 L8 8" fill="#fff"/></svg></div>
<div class="t" style="left:34px;top:934px;font-size:12px;color:#000;letter-spacing:-0.17px">Virtual SL TP Pending with SL Trailing for Symbol Chart</div>
<div class="t" style="left:358px;top:934px;font-size:12px;color:#000;letter-spacing:-0.17px">Virtual SL TP Pending with SL Trailing for Symbol Chart</div>
<div style="position:absolute;left:1719px;top:933px"><svg width="84" height="12" viewBox="0 0 84 12"><g transform="translate(0,0)"><path d="M6 0.8 L7.5 4.4 L11.4 4.6 L8.4 7.1 L9.4 10.9 L6 8.8 L2.6 10.9 L3.6 7.1 L0.6 4.6 L4.5 4.4Z" fill="#eee070" stroke="#a08a20" stroke-width="0.8"/></g><g transform="translate(18,0)"><path d="M6 0.8 L7.5 4.4 L11.4 4.6 L8.4 7.1 L9.4 10.9 L6 8.8 L2.6 10.9 L3.6 7.1 L0.6 4.6 L4.5 4.4Z" fill="#eee070" stroke="#a08a20" stroke-width="0.8"/></g><g transform="translate(36,0)"><path d="M6 0.8 L7.5 4.4 L11.4 4.6 L8.4 7.1 L9.4 10.9 L6 8.8 L2.6 10.9 L3.6 7.1 L0.6 4.6 L4.5 4.4Z" fill="#eee070" stroke="#a08a20" stroke-width="0.8"/></g><g transform="translate(54,0)"><path d="M6 0.8 L7.5 4.4 L11.4 4.6 L8.4 7.1 L9.4 10.9 L6 8.8 L2.6 10.9 L3.6 7.1 L0.6 4.6 L4.5 4.4Z" fill="#eee070" stroke="#a08a20" stroke-width="0.8"/></g><g transform="translate(72,0)"><path d="M6 0.8 L7.5 4.4 L11.4 4.6 L8.4 7.1 L9.4 10.9 L6 8.8 L2.6 10.9 L3.6 7.1 L0.6 4.6 L4.5 4.4Z" fill="#eee070" stroke="#a08a20" stroke-width="0.8"/></g></svg></div>
<div class="t" style="left:1815px;top:934px;font-size:12px;color:#000;width:77px;text-align:right;letter-spacing:-0.3px">2024.04.10</div>
<div style="position:absolute;left:16px;top:953px;width:13px;height:13px"><svg width="13" height="13" viewBox="0 0 13 13"><circle cx="6.5" cy="4" r="2.8" fill="#d8e6f0" stroke="#4a6e88"/><path d="M3 2 H10 L9 0.5 H4Z" fill="#4a6e88"/><path d="M1 12.5 Q1 7.5 6.5 7.5 Q12 7.5 12 12.5Z" fill="#4a7fa8" stroke="#2e5878"/><path d="M5 8 L6.5 11 L8 8" fill="#fff"/></svg></div>
<div class="t" style="left:34px;top:954px;font-size:12px;color:#000;letter-spacing:-0.17px">Close Basket Pairs v1</div>
<div class="t" style="left:358px;top:954px;font-size:12px;color:#000;letter-spacing:-0.17px">This MQL4 EA is designed to close positions for a basket of currency pairs based on certain profit and loss thresholds.</div>
<div style="position:absolute;left:1719px;top:953px"><svg width="84" height="12" viewBox="0 0 84 12"><g transform="translate(0,0)"><path d="M6 0.8 L7.5 4.4 L11.4 4.6 L8.4 7.1 L9.4 10.9 L6 8.8 L2.6 10.9 L3.6 7.1 L0.6 4.6 L4.5 4.4Z" fill="#eee070" stroke="#a08a20" stroke-width="0.8"/></g><g transform="translate(18,0)"><path d="M6 0.8 L7.5 4.4 L11.4 4.6 L8.4 7.1 L9.4 10.9 L6 8.8 L2.6 10.9 L3.6 7.1 L0.6 4.6 L4.5 4.4Z" fill="#eee070" stroke="#a08a20" stroke-width="0.8"/></g><g transform="translate(36,0)"><path d="M6 0.8 L7.5 4.4 L11.4 4.6 L8.4 7.1 L9.4 10.9 L6 8.8 L2.6 10.9 L3.6 7.1 L0.6 4.6 L4.5 4.4Z" fill="#eee070" stroke="#a08a20" stroke-width="0.8"/></g><g transform="translate(54,0)"><path d="M6 0.8 L7.5 4.4 L11.4 4.6 L8.4 7.1 L9.4 10.9 L6 8.8 L2.6 10.9 L3.6 7.1 L0.6 4.6 L4.5 4.4Z" fill="#eee070" stroke="#a08a20" stroke-width="0.8"/></g><g transform="translate(72,0)"><path d="M6 0.8 L7.5 4.4 L11.4 4.6 L8.4 7.1 L9.4 10.9 L6 8.8 L2.6 10.9 L3.6 7.1 L0.6 4.6 L4.5 4.4Z" fill="#fbf6d0" stroke="#a08a20" stroke-width="0.8"/></g></svg></div>
<div class="t" style="left:1815px;top:954px;font-size:12px;color:#000;width:77px;text-align:right;letter-spacing:-0.3px">2024.04.10</div>
<div style="position:absolute;left:16px;top:973px;width:13px;height:13px"><svg width="13" height="13" viewBox="0 0 13 13"><path d="M1 2 H9 L12 11 H4Z" fill="#f2d640" stroke="#a88a10"/><path d="M1 2 Q0 5 3 5" fill="none" stroke="#a88a10"/><rect x="6" y="8" width="4" height="3" fill="#c89a10"/></svg></div>
<div class="t" style="left:34px;top:974px;font-size:12px;color:#000;letter-spacing:-0.17px">Reverse Trades For All Symbols Script</div>
<div class="t" style="left:358px;top:974px;font-size:12px;color:#000;letter-spacing:-0.17px">Reverses all open trades after Closure for all symbols .</div>
<div style="position:absolute;left:1719px;top:973px"><svg width="84" height="12" viewBox="0 0 84 12"><g transform="translate(0,0)"><path d="M6 0.8 L7.5 4.4 L11.4 4.6 L8.4 7.1 L9.4 10.9 L6 8.8 L2.6 10.9 L3.6 7.1 L0.6 4.6 L4.5 4.4Z" fill="#eee070" stroke="#a08a20" stroke-width="0.8"/></g><g transform="translate(18,0)"><path d="M6 0.8 L7.5 4.4 L11.4 4.6 L8.4 7.1 L9.4 10.9 L6 8.8 L2.6 10.9 L3.6 7.1 L0.6 4.6 L4.5 4.4Z" fill="#eee070" stroke="#a08a20" stroke-width="0.8"/></g><g transform="translate(36,0)"><path d="M6 0.8 L7.5 4.4 L11.4 4.6 L8.4 7.1 L9.4 10.9 L6 8.8 L2.6 10.9 L3.6 7.1 L0.6 4.6 L4.5 4.4Z" fill="#eee070" stroke="#a08a20" stroke-width="0.8"/></g><g transform="translate(54,0)"><path d="M6 0.8 L7.5 4.4 L11.4 4.6 L8.4 7.1 L9.4 10.9 L6 8.8 L2.6 10.9 L3.6 7.1 L0.6 4.6 L4.5 4.4Z" fill="#eee070" stroke="#a08a20" stroke-width="0.8"/></g><g transform="translate(72,0)"><path d="M6 0.8 L7.5 4.4 L11.4 4.6 L8.4 7.1 L9.4 10.9 L6 8.8 L2.6 10.9 L3.6 7.1 L0.6 4.6 L4.5 4.4Z" fill="#fbf6d0" stroke="#a08a20" stroke-width="0.8"/></g></svg></div>
<div class="t" style="left:1815px;top:974px;font-size:12px;color:#000;width:77px;text-align:right;letter-spacing:-0.3px">2024.04.09</div>
<div style="position:absolute;left:1897px;top:886px;width:16px;height:104px;background:#f0f0f0"></div>
<div style="position:absolute;left:1899px;top:903px;width:12px;height:17px;background:#cdcdcd"></div>
<svg style="position:absolute;left:1900px;top:890px" width="10" height="7"><path d="M1 6 L5 2 L9 6" stroke="#404040" stroke-width="1.6" fill="none"/></svg>
<svg style="position:absolute;left:1900px;top:978px" width="10" height="7"><path d="M1 1 L5 5 L9 1" stroke="#404040" stroke-width="1.6" fill="none"/></svg>
<div style="position:absolute;left:13px;top:990px;width:1900px;height:1px;background:#000"></div>
<div class="t" style="left:25px;top:995px;font-size:12px;color:#8a8a8a;letter-spacing:-0.4px">Alerts</div>
<div style="position:absolute;left:65px;top:995px;width:1px;height:14px;background:#777"></div>
<div class="t" style="left:75px;top:995px;font-size:12px;color:#8a8a8a;letter-spacing:-0.4px">Mailbox</div>
<div class="t" style="left:119px;top:1001px;font-size:9px;color:#e02020;">6</div>
<div style="position:absolute;left:135px;top:995px;width:1px;height:14px;background:#777"></div>
<div class="t" style="left:145px;top:995px;font-size:12px;color:#8a8a8a;letter-spacing:-0.4px">Market</div>
<div class="t" style="left:184px;top:1001px;font-size:9px;color:#e02020;">112</div>
<div style="position:absolute;left:210px;top:995px;width:1px;height:14px;background:#777"></div>
<div class="t" style="left:219px;top:995px;font-size:12px;color:#8a8a8a;letter-spacing:-0.4px">Articles</div>
<div style="position:absolute;left:268px;top:990px;width:75px;height:20px;background:#fff;border:1px solid #000;border-top:none;box-sizing:border-box"></div>
<div class="t" style="left:278px;top:995px;font-size:12px;color:#000;letter-spacing:-0.4px">Code Base</div>
<div class="t" style="left:353px;top:995px;font-size:12px;color:#8a8a8a;letter-spacing:-0.4px">Experts</div>
<div style="position:absolute;left:401px;top:995px;width:1px;height:14px;background:#777"></div>
<div class="t" style="left:411px;top:995px;font-size:12px;color:#8a8a8a;letter-spacing:-0.4px">Journal</div>
<div style="position:absolute;left:459px;top:995px;width:1px;height:14px;background:#777"></div>
</body></html>
